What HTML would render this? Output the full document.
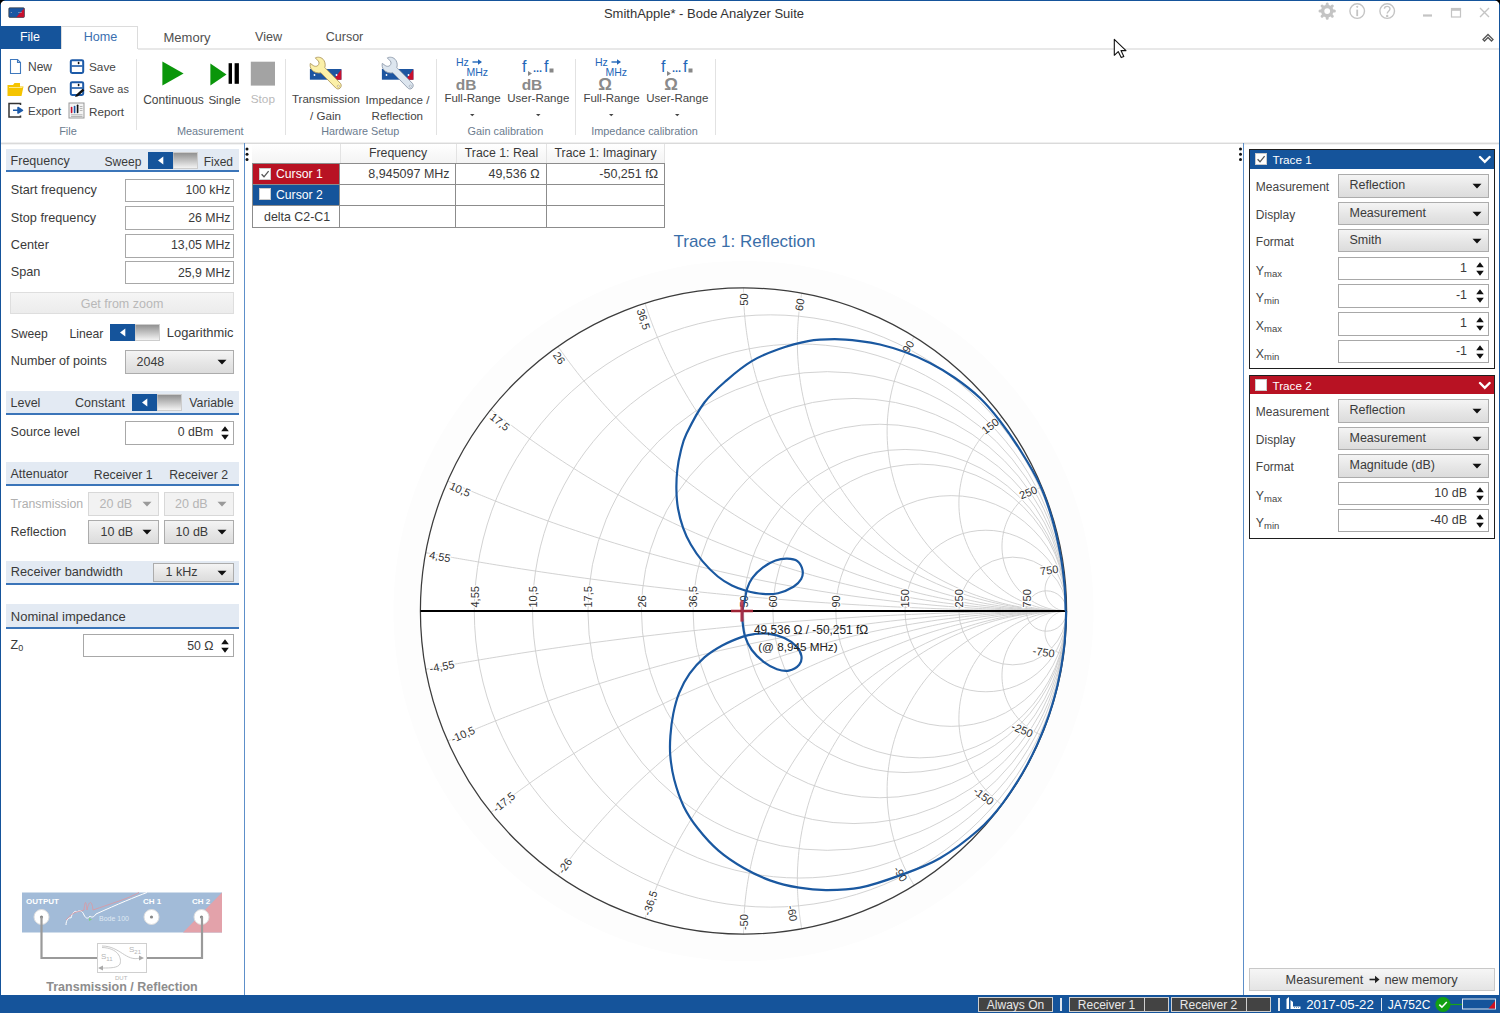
<!DOCTYPE html>
<html><head><meta charset="utf-8"><style>
html,body{margin:0;padding:0;}
body{width:1500px;height:1013px;position:relative;overflow:hidden;background:#fff;font-family:"Liberation Sans", sans-serif;}
.t{position:absolute;white-space:nowrap;font-family:"Liberation Sans", sans-serif;}
</style></head><body>
<div style="position:absolute;left:0px;top:0px;width:1500px;height:1px;background:#15549b"></div>
<div style="position:absolute;left:0px;top:0px;width:1px;height:1013px;background:#15549b"></div>
<div style="position:absolute;left:1499px;top:0px;width:1px;height:1013px;background:#15549b"></div>
<svg style="position:absolute;left:8px;top:7px" width="18" height="12"><rect x="0.8" y="0.8" width="15.6" height="9.6" rx="1" fill="#1a56a3" stroke="#3a3a3a" stroke-width="0.7"/><path d="M16.2,1.3 L16.2,10.2 L8.3,10.2 Z" fill="#c8102e"/><circle cx="3.3" cy="5.5" r="0.6" fill="#aab"/><path d="M10,5.5 H14" stroke="#aab" stroke-width="0.6"/></svg>
<svg style="position:absolute;left:0;top:0" width="6" height="6"><path d="M0,0 H5 L3,1 L1,3 L0,5 Z" fill="#000"/></svg>
<svg style="position:absolute;left:1494px;top:0" width="6" height="6"><path d="M6,0 H1 L3,1 L5,3 L6,5 Z" fill="#000"/></svg>
<div class="t" style="left:404px;width:600px;text-align:center;top:6.60px;font-size:13px;line-height:13px;color:#333;font-weight:400;">SmithApple* - Bode Analyzer Suite</div>
<svg style="position:absolute;left:1310px;top:0px" width="190" height="26" fill="none" stroke="#c4c4c4">
<g transform="translate(17.2,11.1)"><circle r="4.6" stroke-width="3.4"/><g stroke-width="3" stroke-linecap="round"><path d="M0,-7.2V-5.5M0,7.2V5.5M-7.2,0H-5.5M7.2,0H5.5M-5.1,-5.1L-3.9,-3.9M5.1,5.1L3.9,3.9M-5.1,5.1L-3.9,3.9M5.1,-5.1L3.9,-3.9"/></g></g>
<g transform="translate(47.2,11.1)" stroke-width="1.4"><circle r="7.3"/><path d="M0,-1.5V5" stroke-width="1.8"/><circle cy="-4.3" r="0.6" fill="#c4c4c4" stroke-width="1"/></g>
<g transform="translate(77.2,11.1)" stroke-width="1.4"><circle r="7.3"/><path d="M-2.8,-2.3 C-2.8,-5.5 2.8,-5.5 2.8,-2.3 C2.8,0 0,0.3 0,2.5" stroke-width="1.4"/><circle cy="4.8" r="0.5" fill="#c4c4c4"/></g>
<path d="M113,15.5H122" stroke-width="2.2"/>
<rect x="141.5" y="8.5" width="9" height="8.5" stroke-width="1.2"/><path d="M141.5,9.8H150.5" stroke-width="2"/>
<path d="M170,8L179,17M179,8L170,17" stroke-width="1.4"/>
</svg>
<div style="position:absolute;left:0px;top:26px;width:61px;height:23px;background:#15549b"></div>
<div class="t" style="left:-270px;width:600px;text-align:center;top:31.00px;font-size:13px;line-height:13px;color:#ffffff;font-weight:400;font-size:12.5px">File</div>
<div style="position:absolute;left:61px;top:26px;width:77px;height:23px;background:#fff;border:1px solid #dcdcdc;border-bottom:none;box-sizing:border-box"></div>
<div class="t" style="left:-199.5px;width:600px;text-align:center;top:30.83px;font-size:12.6px;line-height:12.6px;color:#3a6fb0;font-weight:400;">Home</div>
<div class="t" style="left:-113px;width:600px;text-align:center;top:30.50px;font-size:13px;line-height:13px;color:#505050;font-weight:400;">Memory</div>
<div class="t" style="left:-31.5px;width:600px;text-align:center;top:30.83px;font-size:12.6px;line-height:12.6px;color:#505050;font-weight:400;">View</div>
<div class="t" style="left:44.5px;width:600px;text-align:center;top:30.92px;font-size:12.5px;line-height:12.5px;color:#505050;font-weight:400;">Cursor</div>
<div style="position:absolute;left:138px;top:48px;width:1361px;height:2px;background:#e8e8e8"></div>
<svg style="position:absolute;left:1480px;top:30px" width="16" height="14" fill="none" stroke="#555" stroke-width="1.3"><path d="M3,9.5 L8,4.5 L13,9.5 L11.5,11 L8,7.5 L4.5,11 Z"/></svg>
<div style="position:absolute;left:1px;top:142px;width:1498px;height:1px;background:#efefef"></div>
<div style="position:absolute;left:1px;top:143px;width:1498px;height:1px;background:#dadada"></div>
<div style="position:absolute;left:1px;top:144px;width:1498px;height:1px;background:#f3f3f3"></div>
<div style="position:absolute;left:0px;top:995px;width:1500px;height:18px;background:#15549b"></div>
<div style="position:absolute;left:244px;top:143px;width:1px;height:852px;background:#5d8fc9"></div>
<div style="position:absolute;left:1243px;top:143px;width:1px;height:852px;background:#5d8fc9"></div>
<svg style="position:absolute;left:0;top:50px" width="140" height="80">
<g fill="none" stroke="#3f78bd" stroke-width="1.1"><path d="M10.5,9.5 H17.5 L20.5,12.5 V23.5 H10.5 Z"/><path d="M17.5,9.5 V12.5 H20.5"/></g>
<g><rect x="70.8" y="10.3" width="12.4" height="12.6" rx="1.3" fill="#fff" stroke="#1c5aa8" stroke-width="2"/><path d="M71.5,16 H82.5" stroke="#1c5aa8" stroke-width="1.6"/><ellipse cx="78.6" cy="13" rx="0.9" ry="1.3" fill="#111"/></g>
<path d="M7.5,35 H13 L14.5,33 H20 V36.5 H23.5 L21.5,46 H7.5 Z" fill="#f5c400"/><path d="M9,37.5 H22.5" stroke="#fff3b0" stroke-width="0.8"/>
<g><rect x="70.8" y="32.3" width="12.4" height="12.6" rx="1.3" fill="#fff" stroke="#1c5aa8" stroke-width="2"/><path d="M71.5,38 H82.5" stroke="#1c5aa8" stroke-width="1.6"/><ellipse cx="78.6" cy="35" rx="0.9" ry="1.3" fill="#111"/><path d="M75,47 L76.3,44.6 L82.6,38.8 L84.3,40.4 L78,46.2 Z" fill="#111"/></g>
<g fill="none" stroke="#333" stroke-width="1.5"><path d="M20.5,55 V53.5 H9 V67 H20.5 V65.5"/></g><path d="M13,60.3 H18 V57.5 L22.5,60.3 L18,63 V60.3" fill="#1c5aa8" stroke="#1c5aa8" stroke-width="1.5" stroke-linejoin="round"/>
<rect x="69" y="53" width="15" height="15" fill="#f4f4f4" stroke="#999" stroke-width="1"/>
<path d="M71.6,57.5V62.5" stroke="#c8102e" stroke-width="1.6" stroke-linecap="round"/><path d="M74.6,56.5V62.5" stroke="#1c5aa8" stroke-width="1.6" stroke-linecap="round"/><path d="M77.6,55.2V62.5" stroke="#111" stroke-width="1.6" stroke-linecap="round"/>
<path d="M79.8,56.5H82.5M79.8,58.5H82.5M79.8,60.5H82.5M71,64.8H82.5M71,66.5H82.5" stroke="#999" stroke-width="0.7"/>
<path d="M136.5,9V85" stroke="#e2e2e2"/>
</svg>
<div class="t" style="left:28px;top:61.44px;font-size:12px;line-height:12px;color:#444;font-weight:400;">New</div>
<div class="t" style="left:89px;top:61.61px;font-size:11.8px;line-height:11.8px;color:#444;font-weight:400;">Save</div>
<div class="t" style="left:27.5px;top:83.61px;font-size:11.8px;line-height:11.8px;color:#444;font-weight:400;">Open</div>
<div class="t" style="left:89px;top:84.37px;font-size:10.9px;line-height:10.9px;color:#444;font-weight:400;letter-spacing:0.1px">Save as</div>
<div class="t" style="left:28px;top:105.97px;font-size:11.5px;line-height:11.5px;color:#444;font-weight:400;">Export</div>
<div class="t" style="left:89px;top:105.80px;font-size:11.7px;line-height:11.7px;color:#444;font-weight:400;">Report</div>
<div class="t" style="left:-232px;width:600px;text-align:center;top:126.09px;font-size:11px;line-height:11px;color:#6b7b8e;font-weight:400;">File</div>
<svg style="position:absolute;left:136px;top:50px" width="160" height="90">
<path d="M26.4,11.4 L47.6,23.5 L26.4,35.6 Z" fill="#0a960a"/>
<path d="M74.4,13.5 L90.5,24.5 L74.4,35.6 Z" fill="#0a960a"/>
<rect x="92.6" y="13.2" width="3.4" height="20.6" fill="#000"/><rect x="98.6" y="13.2" width="4.3" height="20.6" fill="#000"/>
<rect x="114.8" y="11.7" width="24.2" height="23.9" fill="#a3a3a3"/>
<path d="M149.5,9V85" stroke="#e2e2e2"/>
</svg>
<div class="t" style="left:-126.5px;width:600px;text-align:center;top:93.54px;font-size:12px;line-height:12px;color:#444;font-weight:400;">Continuous</div>
<div class="t" style="left:-75.5px;width:600px;text-align:center;top:93.88px;font-size:11.6px;line-height:11.6px;color:#444;font-weight:400;">Single</div>
<div class="t" style="left:-37.19999999999999px;width:600px;text-align:center;top:93.71px;font-size:11.8px;line-height:11.8px;color:#b9b9b9;font-weight:400;">Stop</div>
<div class="t" style="left:-89.80000000000001px;width:600px;text-align:center;top:126.37px;font-size:10.9px;line-height:10.9px;color:#6b7b8e;font-weight:400;">Measurement</div>
<svg style="position:absolute;left:305px;top:52px" width="120" height="45">
<g transform="translate(0,0)">
<rect x="4.9" y="17" width="31.5" height="10.7" fill="#1d55a0"/><path d="M36.4,17.3 V27.7 H28.7 Z" fill="#c8102e"/>
<circle cx="9.5" cy="23" r="0.9" fill="#fff"/><circle cx="31.5" cy="23" r="0.9" fill="#fff"/>
<path d="M10.3,5.9 C12.5,4.6 17,5 19,8.5 C20.3,10.8 20.5,13.5 19.8,15.6 L35.4,31.3 C36.9,32.9 36.3,36 34,36.8 C32.8,37.2 31.6,36.8 30.8,36 L15.9,20.8 C12.8,21.4 9,20.5 6.8,17.8 C5.1,15.8 4.9,13.2 5.3,11.4 L8.3,13.6 C9.6,14.5 11.6,14.6 12.8,13.6 C14.2,12.4 14.4,10.2 13.3,9 Z" fill="#fbf0a8" stroke="#b09a5e" stroke-width="0.9" stroke-linejoin="round"/>
<circle cx="33.3" cy="34.2" r="1.1" fill="#fff" stroke="#b09a5e" stroke-width="0.6"/>
</g>
<g transform="translate(72,0)">
<rect x="4.9" y="17" width="31.5" height="10.7" fill="#1d55a0"/><path d="M36.4,17.3 V27.7 H28.7 Z" fill="#c8102e"/>
<circle cx="9.5" cy="23" r="0.9" fill="#fff"/><circle cx="31.5" cy="23" r="0.9" fill="#fff"/>
<path d="M10.3,5.9 C12.5,4.6 17,5 19,8.5 C20.3,10.8 20.5,13.5 19.8,15.6 L35.4,31.3 C36.9,32.9 36.3,36 34,36.8 C32.8,37.2 31.6,36.8 30.8,36 L15.9,20.8 C12.8,21.4 9,20.5 6.8,17.8 C5.1,15.8 4.9,13.2 5.3,11.4 L8.3,13.6 C9.6,14.5 11.6,14.6 12.8,13.6 C14.2,12.4 14.4,10.2 13.3,9 Z" fill="#dde6ef" stroke="#8f9bab" stroke-width="0.9" stroke-linejoin="round"/>
<circle cx="33.3" cy="34.2" r="1.1" fill="#fff" stroke="#8f9bab" stroke-width="0.6"/>
</g>
</svg>
<div class="t" style="left:26px;width:600px;text-align:center;top:93.97px;font-size:11.5px;line-height:11.5px;color:#444;font-weight:400;">Transmission</div>
<div class="t" style="left:25.5px;width:600px;text-align:center;top:109.98px;font-size:11.6px;line-height:11.6px;color:#444;font-weight:400;">/ Gain</div>
<div class="t" style="left:97.5px;width:600px;text-align:center;top:93.88px;font-size:11.6px;line-height:11.6px;color:#444;font-weight:400;">Impedance /</div>
<div class="t" style="left:97.30000000000001px;width:600px;text-align:center;top:109.98px;font-size:11.6px;line-height:11.6px;color:#444;font-weight:400;">Reflection</div>
<div class="t" style="left:60.19999999999999px;width:600px;text-align:center;top:126.46px;font-size:10.8px;line-height:10.8px;color:#6b7b8e;font-weight:400;">Hardware Setup</div>
<div style="position:absolute;left:436px;top:59px;width:1px;height:76px;background:#e2e2e2"></div>
<svg style="position:absolute;left:456px;top:50px" width="260" height="70">
<g transform="translate(0,0)">
<text x="0" y="15.5" font-size="10.5" fill="#2266b8" font-family="Liberation Sans">Hz</text>
<path d="M16.5,12 H24" stroke="#2266b8" stroke-width="1.4"/><path d="M22,9.3 L26,12 L22,14.7 Z" fill="#2266b8"/>
<text x="10.5" y="25.5" font-size="10.5" fill="#2266b8" font-family="Liberation Sans">MHz</text>
<text x="10" y="39.5" font-size="15.5" fill="#8a8a8a" font-weight="bold" font-family="Liberation Sans" text-anchor="middle">dB</text>
<text x="66" y="22" font-size="16" fill="#2266b8" font-family="Liberation Sans">f</text>
<path d="M72,21 L76,23.5 L72,26 Z" fill="#888"/>
<text x="77" y="22" font-size="11" fill="#2266b8" font-family="Liberation Sans" font-weight="bold">...</text>
<text x="88" y="22" font-size="16" fill="#2266b8" font-family="Liberation Sans">f</text>
<rect x="93.5" y="18.5" width="4" height="4" fill="#888"/>
<text x="76" y="39.5" font-size="15.5" fill="#8a8a8a" font-weight="bold" font-family="Liberation Sans" text-anchor="middle">dB</text>
<path d="M14,64 L18.5,64 L16.25,66.3 Z" fill="#444"/>
<path d="M80,64 L84.5,64 L82.25,66.3 Z" fill="#444"/>
</g>
<g transform="translate(139,0)">
<text x="0" y="15.5" font-size="10.5" fill="#2266b8" font-family="Liberation Sans">Hz</text>
<path d="M16.5,12 H24" stroke="#2266b8" stroke-width="1.4"/><path d="M22,9.3 L26,12 L22,14.7 Z" fill="#2266b8"/>
<text x="10.5" y="25.5" font-size="10.5" fill="#2266b8" font-family="Liberation Sans">MHz</text>
<text x="10" y="39.5" font-size="17" fill="#8a8a8a" font-weight="bold" font-family="Liberation Sans" text-anchor="middle">Ω</text>
<text x="66" y="22" font-size="16" fill="#2266b8" font-family="Liberation Sans">f</text>
<path d="M72,21 L76,23.5 L72,26 Z" fill="#888"/>
<text x="77" y="22" font-size="11" fill="#2266b8" font-family="Liberation Sans" font-weight="bold">...</text>
<text x="88" y="22" font-size="16" fill="#2266b8" font-family="Liberation Sans">f</text>
<rect x="93.5" y="18.5" width="4" height="4" fill="#888"/>
<text x="76" y="39.5" font-size="17" fill="#8a8a8a" font-weight="bold" font-family="Liberation Sans" text-anchor="middle">Ω</text>
<path d="M14,64 L18.5,64 L16.25,66.3 Z" fill="#444"/>
<path d="M80,64 L84.5,64 L82.25,66.3 Z" fill="#444"/>
</g>
</svg>
<div class="t" style="left:172.5px;width:600px;text-align:center;top:93.27px;font-size:11.5px;line-height:11.5px;color:#444;font-weight:400;">Full-Range</div>
<div class="t" style="left:238.29999999999995px;width:600px;text-align:center;top:93.27px;font-size:11.5px;line-height:11.5px;color:#444;font-weight:400;">User-Range</div>
<div class="t" style="left:205.39999999999998px;width:600px;text-align:center;top:126.37px;font-size:10.9px;line-height:10.9px;color:#6b7b8e;font-weight:400;">Gain calibration</div>
<div style="position:absolute;left:575px;top:59px;width:1px;height:76px;background:#e2e2e2"></div>
<div class="t" style="left:311.5px;width:600px;text-align:center;top:93.27px;font-size:11.5px;line-height:11.5px;color:#444;font-weight:400;">Full-Range</div>
<div class="t" style="left:377.29999999999995px;width:600px;text-align:center;top:93.27px;font-size:11.5px;line-height:11.5px;color:#444;font-weight:400;">User-Range</div>
<div class="t" style="left:344.5px;width:600px;text-align:center;top:126.37px;font-size:10.9px;line-height:10.9px;color:#6b7b8e;font-weight:400;">Impedance calibration</div>
<div style="position:absolute;left:715px;top:59px;width:1px;height:76px;background:#e2e2e2"></div>
<svg style="position:absolute;left:1113px;top:38px" width="18" height="23"><path d="M1.3,1.3 L1.3,17.3 L5.2,13.6 L8.2,19.6 L10.8,18.5 L8,12.6 L13,12.6 Z" fill="#fff" stroke="#111" stroke-width="1.1" stroke-linejoin="round"/></svg>
<div style="position:absolute;left:6px;top:149px;width:233px;height:21px;background:#e3eaf3"></div>
<div style="position:absolute;left:6px;top:170px;width:233px;height:2px;background:#3b75b9"></div>
<div class="t" style="left:10.6px;top:155.32px;font-size:12.5px;line-height:12.5px;color:#3a3a3a;font-weight:400;">Frequency</div>
<div class="t" style="left:104.5px;top:155.66px;font-size:12.1px;line-height:12.1px;color:#3a3a3a;font-weight:400;">Sweep</div>
<svg style="position:absolute;left:147.7px;top:152px" width="51" height="17">
<defs><linearGradient id="tg" x1="0" y1="0" x2="0" y2="1"><stop offset="0" stop-color="#8e8e8e"/><stop offset="1" stop-color="#f6f6f6"/></linearGradient></defs>
<rect x="25" y="0.5" width="24.5" height="16" fill="url(#tg)" stroke="#cdcdcd" stroke-width="1"/>
<rect x="0" y="0" width="25" height="17" fill="#15549b"/>
<path d="M10,8.5 L15.3,4.5 L15.3,12.5 Z" fill="#fff"/>
</svg>
<div class="t" style="left:-267px;width:500px;text-align:right;top:155.74px;font-size:12px;line-height:12px;color:#3a3a3a;font-weight:400;">Fixed</div>
<div class="t" style="left:10.8px;top:183.55px;font-size:12.7px;line-height:12.7px;color:#3a3a3a;font-weight:400;">Start frequency</div>
<div style="position:absolute;left:125px;top:179px;width:109px;height:23px;background:#fff;border:1px solid #a8a8a8;box-sizing:border-box"></div>
<div class="t" style="left:-269.5px;width:500px;text-align:right;top:183.89px;font-size:12.3px;line-height:12.3px;color:#3a3a3a;font-weight:400;">100 kHz</div>
<div class="t" style="left:10.8px;top:211.55px;font-size:12.7px;line-height:12.7px;color:#3a3a3a;font-weight:400;">Stop frequency</div>
<div style="position:absolute;left:125px;top:206px;width:109px;height:24px;background:#fff;border:1px solid #a8a8a8;box-sizing:border-box"></div>
<div class="t" style="left:-269.5px;width:500px;text-align:right;top:211.89px;font-size:12.3px;line-height:12.3px;color:#3a3a3a;font-weight:400;">26 MHz</div>
<div class="t" style="left:10.8px;top:239.15px;font-size:12.7px;line-height:12.7px;color:#3a3a3a;font-weight:400;">Center</div>
<div style="position:absolute;left:125px;top:234px;width:109px;height:24px;background:#fff;border:1px solid #a8a8a8;box-sizing:border-box"></div>
<div class="t" style="left:-269.5px;width:500px;text-align:right;top:239.49px;font-size:12.3px;line-height:12.3px;color:#3a3a3a;font-weight:400;">13,05 MHz</div>
<div class="t" style="left:10.8px;top:266.45px;font-size:12.7px;line-height:12.7px;color:#3a3a3a;font-weight:400;">Span</div>
<div style="position:absolute;left:125px;top:261px;width:109px;height:23px;background:#fff;border:1px solid #a8a8a8;box-sizing:border-box"></div>
<div class="t" style="left:-269.5px;width:500px;text-align:right;top:266.79px;font-size:12.3px;line-height:12.3px;color:#3a3a3a;font-weight:400;">25,9 MHz</div>
<div style="position:absolute;left:10px;top:292px;width:224px;height:22px;background:linear-gradient(#f5f5f5,#ececec);border:1px solid #dedede;box-sizing:border-box"></div>
<div class="t" style="left:-178px;width:600px;text-align:center;top:297.72px;font-size:12.5px;line-height:12.5px;color:#b8b8b8;font-weight:400;">Get from zoom</div>
<div class="t" style="left:10.8px;top:327.76px;font-size:12.1px;line-height:12.1px;color:#3a3a3a;font-weight:400;">Sweep</div>
<div class="t" style="left:69.5px;top:327.67px;font-size:12.2px;line-height:12.2px;color:#3a3a3a;font-weight:400;">Linear</div>
<svg style="position:absolute;left:109.7px;top:324px" width="51" height="17">
<defs><linearGradient id="tg" x1="0" y1="0" x2="0" y2="1"><stop offset="0" stop-color="#8e8e8e"/><stop offset="1" stop-color="#f6f6f6"/></linearGradient></defs>
<rect x="25" y="0.5" width="24.5" height="16" fill="url(#tg)" stroke="#cdcdcd" stroke-width="1"/>
<rect x="0" y="0" width="25" height="17" fill="#15549b"/>
<path d="M10,8.5 L15.3,4.5 L15.3,12.5 Z" fill="#fff"/>
</svg>
<div class="t" style="left:-266.5px;width:500px;text-align:right;top:327.08px;font-size:12.9px;line-height:12.9px;color:#3a3a3a;font-weight:400;">Logarithmic</div>
<div class="t" style="left:10.8px;top:355.43px;font-size:12.6px;line-height:12.6px;color:#3a3a3a;font-weight:400;">Number of points</div>
<div style="position:absolute;left:125px;top:350px;width:109px;height:24px;background:linear-gradient(#f4f4f4,#e6e6e6 55%,#dcdcdc);border:1px solid #acacac;box-sizing:border-box"></div>
<div class="t" style="left:136.5px;top:355.52px;font-size:12.5px;line-height:12.5px;color:#3a3a3a;font-weight:400;">2048</div>
<svg style="position:absolute;left:216.5px;top:359.0px" width="10" height="6"><path d="M0.5,0.8 L9.5,0.8 L5,5.5 Z" fill="#111"/></svg>
<div style="position:absolute;left:6px;top:391px;width:233px;height:22px;background:#e3eaf3"></div>
<div style="position:absolute;left:6px;top:413px;width:233px;height:2px;background:#3b75b9"></div>
<div class="t" style="left:10.5px;top:396.72px;font-size:12.5px;line-height:12.5px;color:#3a3a3a;font-weight:400;">Level</div>
<div class="t" style="left:75px;top:396.72px;font-size:12.5px;line-height:12.5px;color:#3a3a3a;font-weight:400;">Constant</div>
<svg style="position:absolute;left:131.7px;top:394px" width="51" height="17">
<defs><linearGradient id="tg" x1="0" y1="0" x2="0" y2="1"><stop offset="0" stop-color="#8e8e8e"/><stop offset="1" stop-color="#f6f6f6"/></linearGradient></defs>
<rect x="25" y="0.5" width="24.5" height="16" fill="url(#tg)" stroke="#cdcdcd" stroke-width="1"/>
<rect x="0" y="0" width="25" height="17" fill="#15549b"/>
<path d="M10,8.5 L15.3,4.5 L15.3,12.5 Z" fill="#fff"/>
</svg>
<div class="t" style="left:-266.5px;width:500px;text-align:right;top:396.89px;font-size:12.3px;line-height:12.3px;color:#3a3a3a;font-weight:400;">Variable</div>
<div class="t" style="left:10.5px;top:426.03px;font-size:12.6px;line-height:12.6px;color:#3a3a3a;font-weight:400;">Source level</div>
<div style="position:absolute;left:125px;top:421px;width:109px;height:24px;background:#fff;border:1px solid #a8a8a8;box-sizing:border-box"></div>
<svg style="position:absolute;left:220px;top:425.0px" width="10" height="16"><path d="M1.2,6.2 L5,1.2 L8.8,6.2 Z M1.2,9.8 L8.8,9.8 L5,14.8 Z" fill="#111"/></svg>
<div class="t" style="left:-286.7px;width:500px;text-align:right;top:426.29px;font-size:12.3px;line-height:12.3px;color:#3a3a3a;font-weight:400;">0 dBm</div>
<div style="position:absolute;left:6px;top:462px;width:233px;height:22px;background:#e3eaf3"></div>
<div style="position:absolute;left:6px;top:484px;width:233px;height:2px;background:#3b75b9"></div>
<div class="t" style="left:10.5px;top:468.42px;font-size:12.5px;line-height:12.5px;color:#3a3a3a;font-weight:400;">Attenuator</div>
<div class="t" style="left:-176.8px;width:600px;text-align:center;top:468.59px;font-size:12.3px;line-height:12.3px;color:#3a3a3a;font-weight:400;">Receiver 1</div>
<div class="t" style="left:-101.4px;width:600px;text-align:center;top:468.59px;font-size:12.3px;line-height:12.3px;color:#3a3a3a;font-weight:400;">Receiver 2</div>
<div class="t" style="left:10.5px;top:497.89px;font-size:12.3px;line-height:12.3px;color:#b0b0b0;font-weight:400;">Transmission</div>
<div style="position:absolute;left:88px;top:492px;width:71px;height:24px;background:#f2f2f2;border:1px solid #d8d8d8;box-sizing:border-box"></div>
<div class="t" style="left:99.5px;top:497.72px;font-size:12.5px;line-height:12.5px;color:#b5b5b5;font-weight:400;">20 dB</div>
<svg style="position:absolute;left:141.5px;top:501.0px" width="10" height="6"><path d="M0.5,0.8 L9.5,0.8 L5,5.5 Z" fill="#999"/></svg>
<div style="position:absolute;left:164px;top:492px;width:70px;height:24px;background:#f2f2f2;border:1px solid #d8d8d8;box-sizing:border-box"></div>
<div class="t" style="left:175px;top:497.72px;font-size:12.5px;line-height:12.5px;color:#b5b5b5;font-weight:400;">20 dB</div>
<svg style="position:absolute;left:216.5px;top:501.0px" width="10" height="6"><path d="M0.5,0.8 L9.5,0.8 L5,5.5 Z" fill="#999"/></svg>
<div class="t" style="left:10.5px;top:526.02px;font-size:12.5px;line-height:12.5px;color:#3a3a3a;font-weight:400;">Reflection</div>
<div style="position:absolute;left:88px;top:520px;width:71px;height:24px;background:linear-gradient(#f4f4f4,#e6e6e6 55%,#dcdcdc);border:1px solid #acacac;box-sizing:border-box"></div>
<div class="t" style="left:100.5px;top:526.02px;font-size:12.5px;line-height:12.5px;color:#3a3a3a;font-weight:400;">10 dB</div>
<svg style="position:absolute;left:141.5px;top:529.0px" width="10" height="6"><path d="M0.5,0.8 L9.5,0.8 L5,5.5 Z" fill="#111"/></svg>
<div style="position:absolute;left:164px;top:520px;width:70px;height:24px;background:linear-gradient(#f4f4f4,#e6e6e6 55%,#dcdcdc);border:1px solid #acacac;box-sizing:border-box"></div>
<div class="t" style="left:175.5px;top:526.02px;font-size:12.5px;line-height:12.5px;color:#3a3a3a;font-weight:400;">10 dB</div>
<svg style="position:absolute;left:216.5px;top:529.0px" width="10" height="6"><path d="M0.5,0.8 L9.5,0.8 L5,5.5 Z" fill="#111"/></svg>
<div style="position:absolute;left:6px;top:561px;width:233px;height:22px;background:#e3eaf3"></div>
<div style="position:absolute;left:6px;top:583px;width:233px;height:2px;background:#3b75b9"></div>
<div class="t" style="left:10.8px;top:565.91px;font-size:12.75px;line-height:12.75px;color:#3a3a3a;font-weight:400;">Receiver bandwidth</div>
<div style="position:absolute;left:153px;top:563px;width:81px;height:19px;background:linear-gradient(#f4f4f4,#e6e6e6 55%,#dcdcdc);border:1px solid #acacac;box-sizing:border-box"></div>
<div class="t" style="left:165.5px;top:566.12px;font-size:12.5px;line-height:12.5px;color:#3a3a3a;font-weight:400;">1 kHz</div>
<svg style="position:absolute;left:216.5px;top:569.5px" width="10" height="6"><path d="M0.5,0.8 L9.5,0.8 L5,5.5 Z" fill="#111"/></svg>
<div style="position:absolute;left:6px;top:604px;width:233px;height:23px;background:#e3eaf3"></div>
<div style="position:absolute;left:6px;top:627px;width:233px;height:2px;background:#3b75b9"></div>
<div class="t" style="left:10.8px;top:609.80px;font-size:13px;line-height:13px;color:#3a3a3a;font-weight:400;">Nominal impedance</div>
<div class="t" style="left:10.6px;top:639.42px;font-size:12.5px;line-height:12.5px;color:#3a3a3a;font-weight:400;">Z<span style="font-size:9px;position:relative;top:2px">0</span></div>
<div style="position:absolute;left:83px;top:634px;width:151px;height:23px;background:#fff;border:1px solid #a8a8a8;box-sizing:border-box"></div>
<svg style="position:absolute;left:220px;top:637.5px" width="10" height="16"><path d="M1.2,6.2 L5,1.2 L8.8,6.2 Z M1.2,9.8 L8.8,9.8 L5,14.8 Z" fill="#111"/></svg>
<div class="t" style="left:-286.5px;width:500px;text-align:right;top:639.59px;font-size:12.3px;line-height:12.3px;color:#3a3a3a;font-weight:400;">50 Ω</div>
<svg style="position:absolute;left:0;top:880px" width="244" height="115">
<rect x="22" y="12.5" width="200" height="40" fill="#a2bbd8"/>
<path d="M222,12.5 V52.5 H183 Z" fill="#e3a2aa"/>
<g fill="#fff" font-family="Liberation Sans" font-weight="bold" font-size="8">
<text x="26" y="24">OUTPUT</text><text x="143" y="24">CH 1</text><text x="192" y="24">CH 2</text></g>
<text x="99" y="41" font-family="Liberation Sans" font-size="7" fill="#dfe8f2">Bode 100</text>
<path d="M66,45 C66,40 69,37 71,38 C72,33 75,30 77,32 C80,29 83,32 84,35 C86,39 88,39 90,36 C92,38 94,37 96,34 C118,24 135,17 147,12.5" fill="none" stroke="#fff" stroke-width="1"/><path d="M89,38 L92,39.5 L89,41 Z" fill="#7fd07f"/>
<path d="M66,40 C74,30 80,32 84,30 C85,20 86,20 87,30 C89,20 92,20 93,30 C110,24 130,18 139,12.5" fill="none" stroke="#d99aa4" stroke-width="0.9"/>
<g fill="#fff" stroke="#ddd" stroke-width="1"><circle cx="41.5" cy="37" r="7.5"/><circle cx="151.5" cy="37" r="7.5"/><circle cx="201.5" cy="37" r="7.5"/></g>
<g fill="#888"><circle cx="41.5" cy="37" r="1.6"/><circle cx="151.5" cy="37" r="1.6"/><circle cx="201.5" cy="37" r="1.6"/></g>
<path d="M41.5,37 V78 H97 M147,78 H202 V37" fill="none" stroke="#9a9a9a" stroke-width="2.2"/>
<rect x="97.5" y="63.5" width="49" height="29" fill="#fff" stroke="#cfcfcf" stroke-width="1"/>
<path d="M102,66 C120,66 126,82 140,78" fill="none" stroke="#bbb" stroke-width="0.8"/><path d="M139,75.5 L144,78 L139,80.5 Z M103,85.5 L98,88 L103,90.5 Z" fill="#aaa"/>
<path d="M102,67.5 C118,68 122,78 120,84 C118,88 110,88 103,88" fill="none" stroke="#bbb" stroke-width="0.8"/>
<g font-family="Liberation Sans" font-size="8" fill="#b5b5b5"><text x="101" y="79">S<tspan font-size="6" dy="2">11</tspan></text><text x="129" y="72">S<tspan font-size="6" dy="2">21</tspan></text><text x="115" y="100" font-size="6">DUT</text></g>
</svg>
<div class="t" style="left:-178px;width:600px;text-align:center;top:981.22px;font-size:12.5px;line-height:12.5px;color:#8d8d8d;font-weight:700;">Transmission / Reflection</div>
<div style="position:absolute;left:245px;top:144px;width:998px;height:851px;background:#fff"></div>
<svg style="position:absolute;left:245px;top:146px" width="5" height="16"><circle cx="2" cy="3" r="1.5" fill="#111"/><circle cx="2" cy="8.3" r="1.5" fill="#111"/><circle cx="2" cy="13.6" r="1.5" fill="#111"/></svg>
<svg style="position:absolute;left:1238px;top:146px" width="5" height="16"><circle cx="2.5" cy="3" r="1.5" fill="#111"/><circle cx="2.5" cy="8.3" r="1.5" fill="#111"/><circle cx="2.5" cy="13.6" r="1.5" fill="#111"/></svg>
<div style="position:absolute;left:252px;top:144px;width:412px;height:20px;background:linear-gradient(#ffffff,#f3f3f3)"></div>
<div style="position:absolute;left:340px;top:144px;width:1px;height:20px;background:#e3e3e3"></div>
<div style="position:absolute;left:456px;top:144px;width:1px;height:20px;background:#e3e3e3"></div>
<div style="position:absolute;left:546px;top:144px;width:1px;height:20px;background:#e3e3e3"></div>
<div style="position:absolute;left:664px;top:144px;width:1px;height:20px;background:#e3e3e3"></div>
<div class="t" style="left:98px;width:600px;text-align:center;top:146.59px;font-size:12.3px;line-height:12.3px;color:#3a3a3a;font-weight:400;">Frequency</div>
<div class="t" style="left:201.5px;width:600px;text-align:center;top:146.59px;font-size:12.3px;line-height:12.3px;color:#3a3a3a;font-weight:400;">Trace 1: Real</div>
<div class="t" style="left:305.6px;width:600px;text-align:center;top:146.59px;font-size:12.3px;line-height:12.3px;color:#3a3a3a;font-weight:400;">Trace 1: Imaginary</div>
<div style="position:absolute;left:252px;top:163px;width:413px;height:65px;border:1px solid #8c8c8c;box-sizing:border-box;background:#fff"></div>
<div style="position:absolute;left:253px;top:164px;width:87px;height:20px;background:#b81223"></div>
<div style="position:absolute;left:253px;top:185px;width:87px;height:20px;background:#15549b"></div>
<div style="position:absolute;left:252px;top:184px;width:413px;height:1px;background:#8c8c8c"></div>
<div style="position:absolute;left:252px;top:205px;width:413px;height:1px;background:#8c8c8c"></div>
<div style="position:absolute;left:339px;top:163px;width:1px;height:65px;background:#8c8c8c"></div>
<div style="position:absolute;left:455px;top:163px;width:1px;height:65px;background:#8c8c8c"></div>
<div style="position:absolute;left:546px;top:163px;width:1px;height:65px;background:#8c8c8c"></div>
<svg style="position:absolute;left:258.5px;top:167.5px" width="12" height="12"><rect x="0.5" y="0.5" width="11" height="11" fill="#fff" stroke="#ccc"/><path d="M2.6,6.3 L5,8.8 L9.6,3.2" fill="none" stroke="#555" stroke-width="1.3"/></svg>
<svg style="position:absolute;left:258.5px;top:188px" width="12" height="12"><rect x="0.5" y="0.5" width="11" height="11" fill="#fff" stroke="#ccc"/></svg>
<div class="t" style="left:276px;top:168.27px;font-size:12.2px;line-height:12.2px;color:#fff;font-weight:400;">Cursor 1</div>
<div class="t" style="left:276px;top:189.07px;font-size:12.2px;line-height:12.2px;color:#fff;font-weight:400;">Cursor 2</div>
<div class="t" style="left:264px;top:210.90px;font-size:12.4px;line-height:12.4px;color:#3a3a3a;font-weight:400;">delta C2-C1</div>
<div class="t" style="left:-50.39999999999998px;width:500px;text-align:right;top:168.02px;font-size:12.5px;line-height:12.5px;color:#3a3a3a;font-weight:400;">8,945097 MHz</div>
<div class="t" style="left:39.5px;width:500px;text-align:right;top:168.02px;font-size:12.5px;line-height:12.5px;color:#3a3a3a;font-weight:400;">49,536 Ω</div>
<div class="t" style="left:158px;width:500px;text-align:right;top:168.02px;font-size:12.5px;line-height:12.5px;color:#3a3a3a;font-weight:400;">-50,251 fΩ</div>
<div class="t" style="left:444.5px;width:600px;text-align:center;top:232.61px;font-size:17px;line-height:17px;color:#3a6ea8;font-weight:400;">Trace 1: Reflection</div>
<svg style="position:absolute;left:0;top:0" width="1500" height="1013">
<defs><clipPath id="uc"><circle cx="743.5" cy="611.0" r="323.1"/></clipPath></defs>
<circle cx="743.5" cy="611.0" r="350.1" fill="#fdfdfd"/><circle cx="743.5" cy="611.0" r="323.1" fill="#fff"/>
<g clip-path="url(#uc)" fill="none" stroke="#cdcdcd" stroke-width="0.9">
<circle cx="770.45" cy="611.00" r="296.15"/>
<circle cx="799.58" cy="611.00" r="267.02"/>
<circle cx="827.27" cy="611.00" r="239.33"/>
<circle cx="854.03" cy="611.00" r="212.57"/>
<circle cx="879.84" cy="611.00" r="186.76"/>
<circle cx="905.05" cy="611.00" r="161.55"/>
<circle cx="919.74" cy="611.00" r="146.86"/>
<circle cx="951.21" cy="611.00" r="115.39"/>
<circle cx="985.83" cy="611.00" r="80.78"/>
<circle cx="1012.75" cy="611.00" r="53.85"/>
<circle cx="1046.41" cy="611.00" r="20.19"/>
<path d="M425.71,552.68 L426.34,552.79 L426.37,552.80 L426.41,552.81 L426.46,552.82 L426.50,552.82 L426.55,552.83 L426.60,552.84 L426.65,552.85 L426.70,552.86 L426.76,552.87 L426.83,552.88 L426.89,552.90 L426.96,552.91 L427.04,552.92 L427.12,552.94 L427.20,552.95 L427.29,552.97 L427.38,552.99 L427.48,553.00 L427.58,553.02 L427.69,553.04 L427.81,553.06 L427.94,553.09 L428.07,553.11 L428.21,553.14 L428.35,553.16 L428.51,553.19 L428.68,553.22 L428.85,553.25 L429.04,553.29 L429.23,553.32 L429.44,553.36 L429.66,553.40 L429.89,553.44 L430.14,553.49 L430.40,553.54 L430.68,553.59 L430.97,553.64 L431.28,553.70 L431.60,553.76 L431.95,553.82 L432.32,553.89 L432.70,553.96 L433.11,554.03 L433.55,554.11 L434.01,554.19 L434.49,554.28 L435.00,554.37 L435.55,554.47 L436.12,554.57 L436.73,554.68 L437.37,554.80 L438.04,554.92 L438.76,555.05 L439.52,555.19 L440.32,555.33 L441.16,555.48 L442.06,555.64 L443.00,555.81 L443.99,555.99 L445.04,556.17 L446.15,556.37 L447.33,556.58 L448.56,556.80 L449.86,557.03 L451.24,557.27 L452.69,557.52 L454.22,557.79 L455.83,558.07 L457.52,558.37 L459.31,558.68 L461.19,559.01 L463.17,559.35 L465.26,559.71 L467.45,560.08 L469.75,560.48 L472.18,560.89 L474.72,561.32 L477.39,561.77 L480.20,562.24 L483.14,562.73 L486.22,563.24 L489.45,563.78 L492.84,564.33 L496.38,564.91 L500.09,565.51 L503.96,566.14 L508.00,566.78 L512.23,567.45 L516.63,568.15 L521.22,568.86 L526.00,569.60 L530.97,570.37 L536.14,571.15 L541.51,571.96 L547.08,572.79 L552.85,573.63 L558.83,574.50 L565.01,575.39 L571.40,576.30 L577.99,577.22 L584.78,578.16 L591.78,579.11 L598.97,580.07 L606.35,581.04 L613.93,582.03 L621.68,583.01 L629.62,584.01 L637.72,585.00 L645.98,586.00 L654.39,586.99 L662.94,587.98 L671.62,588.96 L680.42,589.94 L689.32,590.90 L698.32,591.85 L707.39,592.78 L716.53,593.70 L725.71,594.60 L734.93,595.47 L744.17,596.33 L753.41,597.16 L762.64,597.96 L771.84,598.74 L781.00,599.49 L790.10,600.22 L799.13,600.91 L808.07,601.58 L816.92,602.21 L825.65,602.81 L834.26,603.39 L842.73,603.94 L851.06,604.45 L859.23,604.94 L867.23,605.40 L875.07,605.83 L882.72,606.24 L890.19,606.61 L897.46,606.97 L904.54,607.30 L911.42,607.61 L918.10,607.89 L924.58,608.16 L930.85,608.40 L936.91,608.63 L942.77,608.84 L948.43,609.03 L953.88,609.21 L959.14,609.37 L964.19,609.52 L969.06,609.66 L973.73,609.79 L978.21,609.90 L982.51,610.00 L986.63,610.10 L990.58,610.19 L994.35,610.26 L997.96,610.34 L1001.42,610.40 L1004.71,610.46 L1007.86,610.51 L1010.86,610.56 L1013.72,610.61 L1016.45,610.65 L1019.05,610.68 L1021.52,610.71 L1023.88,610.74 L1026.12,610.77 L1028.25,610.79 L1030.27,610.81 L1032.20,610.83 L1034.02,610.85 L1035.76,610.87 L1037.41,610.88 L1038.97,610.89 L1040.45,610.90 L1041.86,610.91 L1043.19,610.92 L1044.46,610.93 L1045.66,610.94 L1046.79,610.94 L1047.87,610.95 L1048.89,610.96 L1049.85,610.96 L1050.77,610.96 L1051.63,610.97 L1052.45,610.97 L1053.23,610.97 L1053.96,610.98 L1054.65,610.98 L1055.31,610.98 L1055.93,610.98 L1056.52,610.99 L1057.07,610.99 L1057.60,610.99 L1058.10,610.99 L1058.57,610.99 L1059.01,610.99 L1059.43,610.99 L1059.83,610.99 L1060.20,610.99 L1060.56,610.99 L1060.89,611.00 L1061.21,611.00 L1061.51,611.00 L1061.79,611.00 L1062.06,611.00 L1062.31,611.00 L1062.55,611.00 L1062.77,611.00 L1062.99,611.00 L1063.19,611.00 L1063.38,611.00 L1063.56,611.00 L1063.73,611.00 L1063.89,611.00 L1064.04,611.00 L1064.18,611.00 L1064.32,611.00 L1064.44,611.00 L1064.56,611.00 L1064.68,611.00 L1064.78,611.00 L1064.89,611.00 L1064.98,611.00 L1065.07,611.00 L1065.16,611.00 L1065.24,611.00 L1065.31,611.00 L1065.39,611.00 L1065.45,611.00 L1065.52,611.00 L1065.58,611.00 L1065.63,611.00 L1065.69,611.00 L1065.74,611.00 L1065.79,611.00 L1065.83,611.00 L1065.88,611.00 L1065.92,611.00 L1065.95,611.00 L1066.60,611.00"/>
<path d="M425.71,669.32 L426.34,669.21 L426.37,669.20 L426.41,669.19 L426.46,669.18 L426.50,669.18 L426.55,669.17 L426.60,669.16 L426.65,669.15 L426.70,669.14 L426.76,669.13 L426.83,669.12 L426.89,669.10 L426.96,669.09 L427.04,669.08 L427.12,669.06 L427.20,669.05 L427.29,669.03 L427.38,669.01 L427.48,669.00 L427.58,668.98 L427.69,668.96 L427.81,668.94 L427.94,668.91 L428.07,668.89 L428.21,668.86 L428.35,668.84 L428.51,668.81 L428.68,668.78 L428.85,668.75 L429.04,668.71 L429.23,668.68 L429.44,668.64 L429.66,668.60 L429.89,668.56 L430.14,668.51 L430.40,668.46 L430.68,668.41 L430.97,668.36 L431.28,668.30 L431.60,668.24 L431.95,668.18 L432.32,668.11 L432.70,668.04 L433.11,667.97 L433.55,667.89 L434.01,667.81 L434.49,667.72 L435.00,667.63 L435.55,667.53 L436.12,667.43 L436.73,667.32 L437.37,667.20 L438.04,667.08 L438.76,666.95 L439.52,666.81 L440.32,666.67 L441.16,666.52 L442.06,666.36 L443.00,666.19 L443.99,666.01 L445.04,665.83 L446.15,665.63 L447.33,665.42 L448.56,665.20 L449.86,664.97 L451.24,664.73 L452.69,664.48 L454.22,664.21 L455.83,663.93 L457.52,663.63 L459.31,663.32 L461.19,662.99 L463.17,662.65 L465.26,662.29 L467.45,661.92 L469.75,661.52 L472.18,661.11 L474.72,660.68 L477.39,660.23 L480.20,659.76 L483.14,659.27 L486.22,658.76 L489.45,658.22 L492.84,657.67 L496.38,657.09 L500.09,656.49 L503.96,655.86 L508.00,655.22 L512.23,654.55 L516.63,653.85 L521.22,653.14 L526.00,652.40 L530.97,651.63 L536.14,650.85 L541.51,650.04 L547.08,649.21 L552.85,648.37 L558.83,647.50 L565.01,646.61 L571.40,645.70 L577.99,644.78 L584.78,643.84 L591.78,642.89 L598.97,641.93 L606.35,640.96 L613.93,639.97 L621.68,638.99 L629.62,637.99 L637.72,637.00 L645.98,636.00 L654.39,635.01 L662.94,634.02 L671.62,633.04 L680.42,632.06 L689.32,631.10 L698.32,630.15 L707.39,629.22 L716.53,628.30 L725.71,627.40 L734.93,626.53 L744.17,625.67 L753.41,624.84 L762.64,624.04 L771.84,623.26 L781.00,622.51 L790.10,621.78 L799.13,621.09 L808.07,620.42 L816.92,619.79 L825.65,619.19 L834.26,618.61 L842.73,618.06 L851.06,617.55 L859.23,617.06 L867.23,616.60 L875.07,616.17 L882.72,615.76 L890.19,615.39 L897.46,615.03 L904.54,614.70 L911.42,614.39 L918.10,614.11 L924.58,613.84 L930.85,613.60 L936.91,613.37 L942.77,613.16 L948.43,612.97 L953.88,612.79 L959.14,612.63 L964.19,612.48 L969.06,612.34 L973.73,612.21 L978.21,612.10 L982.51,612.00 L986.63,611.90 L990.58,611.81 L994.35,611.74 L997.96,611.66 L1001.42,611.60 L1004.71,611.54 L1007.86,611.49 L1010.86,611.44 L1013.72,611.39 L1016.45,611.35 L1019.05,611.32 L1021.52,611.29 L1023.88,611.26 L1026.12,611.23 L1028.25,611.21 L1030.27,611.19 L1032.20,611.17 L1034.02,611.15 L1035.76,611.13 L1037.41,611.12 L1038.97,611.11 L1040.45,611.10 L1041.86,611.09 L1043.19,611.08 L1044.46,611.07 L1045.66,611.06 L1046.79,611.06 L1047.87,611.05 L1048.89,611.04 L1049.85,611.04 L1050.77,611.04 L1051.63,611.03 L1052.45,611.03 L1053.23,611.03 L1053.96,611.02 L1054.65,611.02 L1055.31,611.02 L1055.93,611.02 L1056.52,611.01 L1057.07,611.01 L1057.60,611.01 L1058.10,611.01 L1058.57,611.01 L1059.01,611.01 L1059.43,611.01 L1059.83,611.01 L1060.20,611.01 L1060.56,611.01 L1060.89,611.00 L1061.21,611.00 L1061.51,611.00 L1061.79,611.00 L1062.06,611.00 L1062.31,611.00 L1062.55,611.00 L1062.77,611.00 L1062.99,611.00 L1063.19,611.00 L1063.38,611.00 L1063.56,611.00 L1063.73,611.00 L1063.89,611.00 L1064.04,611.00 L1064.18,611.00 L1064.32,611.00 L1064.44,611.00 L1064.56,611.00 L1064.68,611.00 L1064.78,611.00 L1064.89,611.00 L1064.98,611.00 L1065.07,611.00 L1065.16,611.00 L1065.24,611.00 L1065.31,611.00 L1065.39,611.00 L1065.45,611.00 L1065.52,611.00 L1065.58,611.00 L1065.63,611.00 L1065.69,611.00 L1065.74,611.00 L1065.79,611.00 L1065.83,611.00 L1065.88,611.00 L1065.92,611.00 L1065.95,611.00 L1066.60,611.00"/>
<path d="M447.69,481.03 L448.26,481.28 L448.29,481.29 L448.33,481.31 L448.37,481.33 L448.41,481.34 L448.45,481.36 L448.49,481.38 L448.54,481.40 L448.59,481.42 L448.64,481.45 L448.70,481.47 L448.76,481.50 L448.82,481.53 L448.89,481.55 L448.96,481.59 L449.03,481.62 L449.11,481.65 L449.20,481.69 L449.29,481.73 L449.38,481.77 L449.48,481.81 L449.59,481.86 L449.70,481.91 L449.82,481.96 L449.94,482.02 L450.07,482.07 L450.21,482.13 L450.36,482.20 L450.52,482.27 L450.69,482.34 L450.86,482.42 L451.05,482.50 L451.25,482.59 L451.46,482.68 L451.68,482.77 L451.92,482.88 L452.16,482.99 L452.43,483.10 L452.70,483.22 L453.00,483.35 L453.31,483.48 L453.64,483.63 L453.99,483.78 L454.36,483.94 L454.75,484.11 L455.16,484.29 L455.60,484.48 L456.06,484.68 L456.55,484.89 L457.07,485.11 L457.62,485.35 L458.19,485.60 L458.81,485.86 L459.45,486.14 L460.14,486.43 L460.86,486.74 L461.62,487.07 L462.43,487.41 L463.28,487.78 L464.18,488.16 L465.13,488.56 L466.14,488.99 L467.20,489.44 L468.31,489.91 L469.50,490.41 L470.74,490.93 L472.06,491.48 L473.44,492.06 L474.90,492.67 L476.44,493.32 L478.07,493.99 L479.78,494.70 L481.58,495.44 L483.48,496.22 L485.47,497.03 L487.57,497.89 L489.78,498.78 L492.11,499.72 L494.55,500.70 L497.11,501.72 L499.80,502.79 L502.63,503.91 L505.59,505.07 L508.70,506.29 L511.95,507.55 L515.36,508.86 L518.92,510.22 L522.65,511.64 L526.55,513.10 L530.62,514.62 L534.87,516.19 L539.29,517.82 L543.91,519.49 L548.71,521.22 L553.70,522.99 L558.89,524.82 L564.28,526.69 L569.87,528.61 L575.66,530.57 L581.65,532.57 L587.84,534.62 L594.23,536.69 L600.82,538.80 L607.62,540.94 L614.60,543.11 L621.78,545.29 L629.14,547.50 L636.68,549.71 L644.40,551.94 L652.29,554.17 L660.33,556.39 L668.52,558.61 L676.85,560.82 L685.31,563.01 L693.89,565.17 L702.56,567.31 L711.33,569.42 L720.18,571.49 L729.08,573.52 L738.04,575.51 L747.02,577.44 L756.03,579.33 L765.03,581.16 L774.02,582.93 L782.99,584.63 L791.90,586.28 L800.76,587.86 L809.55,589.38 L818.25,590.82 L826.85,592.20 L835.33,593.52 L843.69,594.77 L851.91,595.95 L859.99,597.06 L867.91,598.12 L875.67,599.11 L883.25,600.04 L890.66,600.91 L897.88,601.72 L904.91,602.48 L911.74,603.19 L918.38,603.84 L924.82,604.45 L931.06,605.02 L937.10,605.54 L942.94,606.02 L948.57,606.47 L954.01,606.87 L959.24,607.25 L964.29,607.59 L969.13,607.91 L973.79,608.20 L978.27,608.46 L982.56,608.70 L986.67,608.92 L990.61,609.12 L994.38,609.30 L997.99,609.47 L1001.44,609.62 L1004.73,609.76 L1007.88,609.88 L1010.88,609.99 L1013.74,610.09 L1016.46,610.18 L1019.06,610.27 L1021.53,610.34 L1023.89,610.41 L1026.12,610.47 L1028.25,610.52 L1030.28,610.57 L1032.20,610.62 L1034.03,610.66 L1035.76,610.69 L1037.41,610.72 L1038.97,610.75 L1040.45,610.78 L1041.86,610.80 L1043.19,610.82 L1044.46,610.84 L1045.66,610.86 L1046.79,610.87 L1047.87,610.89 L1048.89,610.90 L1049.85,610.91 L1050.77,610.92 L1051.63,610.93 L1052.45,610.93 L1053.23,610.94 L1053.96,610.95 L1054.65,610.95 L1055.31,610.96 L1055.93,610.96 L1056.52,610.97 L1057.07,610.97 L1057.60,610.97 L1058.10,610.98 L1058.57,610.98 L1059.01,610.98 L1059.43,610.98 L1059.83,610.99 L1060.20,610.99 L1060.56,610.99 L1060.89,610.99 L1061.21,610.99 L1061.51,610.99 L1061.79,610.99 L1062.06,610.99 L1062.31,610.99 L1062.55,610.99 L1062.77,611.00 L1062.99,611.00 L1063.19,611.00 L1063.38,611.00 L1063.56,611.00 L1063.73,611.00 L1063.89,611.00 L1064.04,611.00 L1064.18,611.00 L1064.32,611.00 L1064.44,611.00 L1064.56,611.00 L1064.68,611.00 L1064.78,611.00 L1064.89,611.00 L1064.98,611.00 L1065.07,611.00 L1065.16,611.00 L1065.24,611.00 L1065.31,611.00 L1065.39,611.00 L1065.45,611.00 L1065.52,611.00 L1065.58,611.00 L1065.63,611.00 L1065.69,611.00 L1065.74,611.00 L1065.79,611.00 L1065.83,611.00 L1065.88,611.00 L1065.92,611.00 L1065.95,611.00 L1066.60,611.00"/>
<path d="M447.69,740.97 L448.26,740.72 L448.29,740.71 L448.33,740.69 L448.37,740.67 L448.41,740.66 L448.45,740.64 L448.49,740.62 L448.54,740.60 L448.59,740.58 L448.64,740.55 L448.70,740.53 L448.76,740.50 L448.82,740.47 L448.89,740.45 L448.96,740.41 L449.03,740.38 L449.11,740.35 L449.20,740.31 L449.29,740.27 L449.38,740.23 L449.48,740.19 L449.59,740.14 L449.70,740.09 L449.82,740.04 L449.94,739.98 L450.07,739.93 L450.21,739.87 L450.36,739.80 L450.52,739.73 L450.69,739.66 L450.86,739.58 L451.05,739.50 L451.25,739.41 L451.46,739.32 L451.68,739.23 L451.92,739.12 L452.16,739.01 L452.43,738.90 L452.70,738.78 L453.00,738.65 L453.31,738.52 L453.64,738.37 L453.99,738.22 L454.36,738.06 L454.75,737.89 L455.16,737.71 L455.60,737.52 L456.06,737.32 L456.55,737.11 L457.07,736.89 L457.62,736.65 L458.19,736.40 L458.81,736.14 L459.45,735.86 L460.14,735.57 L460.86,735.26 L461.62,734.93 L462.43,734.59 L463.28,734.22 L464.18,733.84 L465.13,733.44 L466.14,733.01 L467.20,732.56 L468.31,732.09 L469.50,731.59 L470.74,731.07 L472.06,730.52 L473.44,729.94 L474.90,729.33 L476.44,728.68 L478.07,728.01 L479.78,727.30 L481.58,726.56 L483.48,725.78 L485.47,724.97 L487.57,724.11 L489.78,723.22 L492.11,722.28 L494.55,721.30 L497.11,720.28 L499.80,719.21 L502.63,718.09 L505.59,716.93 L508.70,715.71 L511.95,714.45 L515.36,713.14 L518.92,711.78 L522.65,710.36 L526.55,708.90 L530.62,707.38 L534.87,705.81 L539.29,704.18 L543.91,702.51 L548.71,700.78 L553.70,699.01 L558.89,697.18 L564.28,695.31 L569.87,693.39 L575.66,691.43 L581.65,689.43 L587.84,687.38 L594.23,685.31 L600.82,683.20 L607.62,681.06 L614.60,678.89 L621.78,676.71 L629.14,674.50 L636.68,672.29 L644.40,670.06 L652.29,667.83 L660.33,665.61 L668.52,663.39 L676.85,661.18 L685.31,658.99 L693.89,656.83 L702.56,654.69 L711.33,652.58 L720.18,650.51 L729.08,648.48 L738.04,646.49 L747.02,644.56 L756.03,642.67 L765.03,640.84 L774.02,639.07 L782.99,637.37 L791.90,635.72 L800.76,634.14 L809.55,632.62 L818.25,631.18 L826.85,629.80 L835.33,628.48 L843.69,627.23 L851.91,626.05 L859.99,624.94 L867.91,623.88 L875.67,622.89 L883.25,621.96 L890.66,621.09 L897.88,620.28 L904.91,619.52 L911.74,618.81 L918.38,618.16 L924.82,617.55 L931.06,616.98 L937.10,616.46 L942.94,615.98 L948.57,615.53 L954.01,615.13 L959.24,614.75 L964.29,614.41 L969.13,614.09 L973.79,613.80 L978.27,613.54 L982.56,613.30 L986.67,613.08 L990.61,612.88 L994.38,612.70 L997.99,612.53 L1001.44,612.38 L1004.73,612.24 L1007.88,612.12 L1010.88,612.01 L1013.74,611.91 L1016.46,611.82 L1019.06,611.73 L1021.53,611.66 L1023.89,611.59 L1026.12,611.53 L1028.25,611.48 L1030.28,611.43 L1032.20,611.38 L1034.03,611.34 L1035.76,611.31 L1037.41,611.28 L1038.97,611.25 L1040.45,611.22 L1041.86,611.20 L1043.19,611.18 L1044.46,611.16 L1045.66,611.14 L1046.79,611.13 L1047.87,611.11 L1048.89,611.10 L1049.85,611.09 L1050.77,611.08 L1051.63,611.07 L1052.45,611.07 L1053.23,611.06 L1053.96,611.05 L1054.65,611.05 L1055.31,611.04 L1055.93,611.04 L1056.52,611.03 L1057.07,611.03 L1057.60,611.03 L1058.10,611.02 L1058.57,611.02 L1059.01,611.02 L1059.43,611.02 L1059.83,611.01 L1060.20,611.01 L1060.56,611.01 L1060.89,611.01 L1061.21,611.01 L1061.51,611.01 L1061.79,611.01 L1062.06,611.01 L1062.31,611.01 L1062.55,611.01 L1062.77,611.00 L1062.99,611.00 L1063.19,611.00 L1063.38,611.00 L1063.56,611.00 L1063.73,611.00 L1063.89,611.00 L1064.04,611.00 L1064.18,611.00 L1064.32,611.00 L1064.44,611.00 L1064.56,611.00 L1064.68,611.00 L1064.78,611.00 L1064.89,611.00 L1064.98,611.00 L1065.07,611.00 L1065.16,611.00 L1065.24,611.00 L1065.31,611.00 L1065.39,611.00 L1065.45,611.00 L1065.52,611.00 L1065.58,611.00 L1065.63,611.00 L1065.69,611.00 L1065.74,611.00 L1065.79,611.00 L1065.83,611.00 L1065.88,611.00 L1065.92,611.00 L1065.95,611.00 L1066.60,611.00"/>
<path d="M490.92,409.51 L491.37,409.87 L491.40,409.89 L491.43,409.91 L491.46,409.94 L491.49,409.96 L491.52,409.99 L491.56,410.02 L491.59,410.05 L491.63,410.08 L491.68,410.11 L491.72,410.15 L491.77,410.19 L491.82,410.23 L491.87,410.27 L491.93,410.31 L491.99,410.36 L492.05,410.41 L492.12,410.46 L492.19,410.52 L492.26,410.58 L492.34,410.64 L492.42,410.71 L492.51,410.78 L492.61,410.86 L492.71,410.93 L492.81,411.02 L492.93,411.11 L493.04,411.20 L493.17,411.30 L493.30,411.41 L493.44,411.52 L493.59,411.63 L493.75,411.76 L493.92,411.89 L494.09,412.03 L494.28,412.18 L494.48,412.34 L494.69,412.50 L494.91,412.68 L495.14,412.86 L495.39,413.06 L495.66,413.26 L495.93,413.48 L496.23,413.71 L496.54,413.96 L496.87,414.22 L497.22,414.49 L497.59,414.78 L497.98,415.09 L498.39,415.41 L498.83,415.75 L499.30,416.11 L499.79,416.50 L500.30,416.90 L500.85,417.32 L501.43,417.77 L502.04,418.25 L502.69,418.75 L503.38,419.28 L504.10,419.83 L504.87,420.42 L505.68,421.04 L506.53,421.69 L507.43,422.38 L508.39,423.11 L509.39,423.87 L510.46,424.67 L511.58,425.52 L512.76,426.41 L514.02,427.35 L515.33,428.33 L516.73,429.36 L518.19,430.45 L519.74,431.59 L521.37,432.79 L523.09,434.04 L524.90,435.36 L526.81,436.74 L528.82,438.18 L530.93,439.69 L533.15,441.27 L535.49,442.92 L537.94,444.64 L540.52,446.43 L543.23,448.30 L546.07,450.25 L549.06,452.28 L552.18,454.39 L555.46,456.58 L558.89,458.84 L562.48,461.20 L566.23,463.63 L570.15,466.15 L574.25,468.74 L578.52,471.42 L582.97,474.18 L587.61,477.01 L592.44,479.92 L597.46,482.90 L602.67,485.95 L608.07,489.07 L613.68,492.25 L619.47,495.49 L625.47,498.78 L631.66,502.12 L638.05,505.50 L644.62,508.91 L651.39,512.35 L658.33,515.81 L665.46,519.29 L672.76,522.77 L680.22,526.25 L687.83,529.72 L695.60,533.17 L703.50,536.59 L711.53,539.98 L719.67,543.33 L727.91,546.62 L736.24,549.86 L744.64,553.04 L753.10,556.14 L761.61,559.16 L770.14,562.10 L778.69,564.96 L787.24,567.72 L795.77,570.38 L804.27,572.94 L812.72,575.40 L821.11,577.76 L829.42,580.01 L837.64,582.16 L845.76,584.20 L853.77,586.13 L861.64,587.96 L869.38,589.69 L876.97,591.31 L884.41,592.84 L891.68,594.28 L898.78,595.62 L905.70,596.87 L912.44,598.04 L918.99,599.12 L925.36,600.13 L931.53,601.06 L937.51,601.93 L943.29,602.73 L948.88,603.46 L954.27,604.14 L959.48,604.76 L964.49,605.33 L969.31,605.86 L973.94,606.34 L978.40,606.78 L982.67,607.18 L986.77,607.54 L990.70,607.87 L994.46,608.18 L998.05,608.45 L1001.49,608.70 L1004.78,608.93 L1007.91,609.13 L1010.91,609.32 L1013.76,609.49 L1016.49,609.64 L1019.08,609.78 L1021.55,609.90 L1023.90,610.01 L1026.14,610.11 L1028.26,610.20 L1030.29,610.29 L1032.21,610.36 L1034.03,610.43 L1035.77,610.48 L1037.41,610.54 L1038.98,610.59 L1040.46,610.63 L1041.86,610.67 L1043.20,610.70 L1044.46,610.73 L1045.66,610.76 L1046.79,610.79 L1047.87,610.81 L1048.89,610.83 L1049.85,610.85 L1050.77,610.86 L1051.63,610.88 L1052.45,610.89 L1053.23,610.90 L1053.96,610.91 L1054.65,610.92 L1055.31,610.93 L1055.93,610.94 L1056.52,610.94 L1057.07,610.95 L1057.60,610.96 L1058.10,610.96 L1058.57,610.97 L1059.01,610.97 L1059.43,610.97 L1059.83,610.98 L1060.20,610.98 L1060.56,610.98 L1060.89,610.98 L1061.21,610.98 L1061.51,610.99 L1061.79,610.99 L1062.06,610.99 L1062.31,610.99 L1062.55,610.99 L1062.77,610.99 L1062.99,610.99 L1063.19,610.99 L1063.38,610.99 L1063.56,610.99 L1063.73,611.00 L1063.89,611.00 L1064.04,611.00 L1064.18,611.00 L1064.32,611.00 L1064.44,611.00 L1064.56,611.00 L1064.68,611.00 L1064.78,611.00 L1064.89,611.00 L1064.98,611.00 L1065.07,611.00 L1065.16,611.00 L1065.24,611.00 L1065.31,611.00 L1065.39,611.00 L1065.45,611.00 L1065.52,611.00 L1065.58,611.00 L1065.63,611.00 L1065.69,611.00 L1065.74,611.00 L1065.79,611.00 L1065.83,611.00 L1065.88,611.00 L1065.92,611.00 L1065.95,611.00 L1066.60,611.00"/>
<path d="M490.92,812.49 L491.37,812.13 L491.40,812.11 L491.43,812.09 L491.46,812.06 L491.49,812.04 L491.52,812.01 L491.56,811.98 L491.59,811.95 L491.63,811.92 L491.68,811.89 L491.72,811.85 L491.77,811.81 L491.82,811.77 L491.87,811.73 L491.93,811.69 L491.99,811.64 L492.05,811.59 L492.12,811.54 L492.19,811.48 L492.26,811.42 L492.34,811.36 L492.42,811.29 L492.51,811.22 L492.61,811.14 L492.71,811.07 L492.81,810.98 L492.93,810.89 L493.04,810.80 L493.17,810.70 L493.30,810.59 L493.44,810.48 L493.59,810.37 L493.75,810.24 L493.92,810.11 L494.09,809.97 L494.28,809.82 L494.48,809.66 L494.69,809.50 L494.91,809.32 L495.14,809.14 L495.39,808.94 L495.66,808.74 L495.93,808.52 L496.23,808.29 L496.54,808.04 L496.87,807.78 L497.22,807.51 L497.59,807.22 L497.98,806.91 L498.39,806.59 L498.83,806.25 L499.30,805.89 L499.79,805.50 L500.30,805.10 L500.85,804.68 L501.43,804.23 L502.04,803.75 L502.69,803.25 L503.38,802.72 L504.10,802.17 L504.87,801.58 L505.68,800.96 L506.53,800.31 L507.43,799.62 L508.39,798.89 L509.39,798.13 L510.46,797.33 L511.58,796.48 L512.76,795.59 L514.02,794.65 L515.33,793.67 L516.73,792.64 L518.19,791.55 L519.74,790.41 L521.37,789.21 L523.09,787.96 L524.90,786.64 L526.81,785.26 L528.82,783.82 L530.93,782.31 L533.15,780.73 L535.49,779.08 L537.94,777.36 L540.52,775.57 L543.23,773.70 L546.07,771.75 L549.06,769.72 L552.18,767.61 L555.46,765.42 L558.89,763.16 L562.48,760.80 L566.23,758.37 L570.15,755.85 L574.25,753.26 L578.52,750.58 L582.97,747.82 L587.61,744.99 L592.44,742.08 L597.46,739.10 L602.67,736.05 L608.07,732.93 L613.68,729.75 L619.47,726.51 L625.47,723.22 L631.66,719.88 L638.05,716.50 L644.62,713.09 L651.39,709.65 L658.33,706.19 L665.46,702.71 L672.76,699.23 L680.22,695.75 L687.83,692.28 L695.60,688.83 L703.50,685.41 L711.53,682.02 L719.67,678.67 L727.91,675.38 L736.24,672.14 L744.64,668.96 L753.10,665.86 L761.61,662.84 L770.14,659.90 L778.69,657.04 L787.24,654.28 L795.77,651.62 L804.27,649.06 L812.72,646.60 L821.11,644.24 L829.42,641.99 L837.64,639.84 L845.76,637.80 L853.77,635.87 L861.64,634.04 L869.38,632.31 L876.97,630.69 L884.41,629.16 L891.68,627.72 L898.78,626.38 L905.70,625.13 L912.44,623.96 L918.99,622.88 L925.36,621.87 L931.53,620.94 L937.51,620.07 L943.29,619.27 L948.88,618.54 L954.27,617.86 L959.48,617.24 L964.49,616.67 L969.31,616.14 L973.94,615.66 L978.40,615.22 L982.67,614.82 L986.77,614.46 L990.70,614.13 L994.46,613.82 L998.05,613.55 L1001.49,613.30 L1004.78,613.07 L1007.91,612.87 L1010.91,612.68 L1013.76,612.51 L1016.49,612.36 L1019.08,612.22 L1021.55,612.10 L1023.90,611.99 L1026.14,611.89 L1028.26,611.80 L1030.29,611.71 L1032.21,611.64 L1034.03,611.57 L1035.77,611.52 L1037.41,611.46 L1038.98,611.41 L1040.46,611.37 L1041.86,611.33 L1043.20,611.30 L1044.46,611.27 L1045.66,611.24 L1046.79,611.21 L1047.87,611.19 L1048.89,611.17 L1049.85,611.15 L1050.77,611.14 L1051.63,611.12 L1052.45,611.11 L1053.23,611.10 L1053.96,611.09 L1054.65,611.08 L1055.31,611.07 L1055.93,611.06 L1056.52,611.06 L1057.07,611.05 L1057.60,611.04 L1058.10,611.04 L1058.57,611.03 L1059.01,611.03 L1059.43,611.03 L1059.83,611.02 L1060.20,611.02 L1060.56,611.02 L1060.89,611.02 L1061.21,611.02 L1061.51,611.01 L1061.79,611.01 L1062.06,611.01 L1062.31,611.01 L1062.55,611.01 L1062.77,611.01 L1062.99,611.01 L1063.19,611.01 L1063.38,611.01 L1063.56,611.01 L1063.73,611.00 L1063.89,611.00 L1064.04,611.00 L1064.18,611.00 L1064.32,611.00 L1064.44,611.00 L1064.56,611.00 L1064.68,611.00 L1064.78,611.00 L1064.89,611.00 L1064.98,611.00 L1065.07,611.00 L1065.16,611.00 L1065.24,611.00 L1065.31,611.00 L1065.39,611.00 L1065.45,611.00 L1065.52,611.00 L1065.58,611.00 L1065.63,611.00 L1065.69,611.00 L1065.74,611.00 L1065.79,611.00 L1065.83,611.00 L1065.88,611.00 L1065.92,611.00 L1065.95,611.00 L1066.60,611.00"/>
<path d="M557.94,346.50 L558.23,346.91 L558.25,346.94 L558.27,346.96 L558.29,346.99 L558.31,347.02 L558.33,347.05 L558.35,347.08 L558.38,347.12 L558.40,347.16 L558.43,347.20 L558.46,347.24 L558.49,347.28 L558.52,347.33 L558.56,347.38 L558.59,347.43 L558.63,347.48 L558.67,347.54 L558.72,347.60 L558.76,347.67 L558.81,347.74 L558.86,347.81 L558.92,347.89 L558.98,347.97 L559.04,348.06 L559.10,348.15 L559.17,348.25 L559.24,348.35 L559.32,348.46 L559.40,348.57 L559.49,348.70 L559.58,348.83 L559.68,348.96 L559.78,349.11 L559.89,349.26 L560.01,349.42 L560.13,349.60 L560.26,349.78 L560.39,349.97 L560.54,350.17 L560.69,350.39 L560.86,350.62 L561.03,350.86 L561.21,351.11 L561.40,351.38 L561.61,351.67 L561.83,351.97 L562.06,352.29 L562.30,352.63 L562.56,352.99 L562.83,353.36 L563.12,353.76 L563.42,354.18 L563.75,354.63 L564.09,355.10 L564.45,355.60 L564.83,356.13 L565.24,356.68 L565.67,357.27 L566.12,357.89 L566.61,358.54 L567.12,359.23 L567.65,359.96 L568.23,360.73 L568.83,361.54 L569.47,362.39 L570.14,363.29 L570.86,364.24 L571.62,365.24 L572.42,366.29 L573.26,367.40 L574.16,368.56 L575.11,369.79 L576.11,371.08 L577.16,372.44 L578.28,373.86 L579.46,375.36 L580.71,376.93 L582.03,378.58 L583.42,380.31 L584.89,382.12 L586.45,384.02 L588.08,386.00 L589.81,388.08 L591.64,390.25 L593.56,392.52 L595.59,394.89 L597.72,397.36 L599.97,399.93 L602.34,402.61 L604.83,405.40 L607.46,408.29 L610.21,411.30 L613.11,414.41 L616.15,417.63 L619.34,420.97 L622.69,424.41 L626.20,427.97 L629.87,431.63 L633.72,435.39 L637.74,439.26 L641.93,443.23 L646.31,447.29 L650.88,451.44 L655.63,455.67 L660.57,459.99 L665.70,464.37 L671.03,468.82 L676.55,473.32 L682.26,477.87 L688.16,482.45 L694.24,487.07 L700.51,491.70 L706.95,496.33 L713.57,500.96 L720.35,505.58 L727.28,510.17 L734.37,514.72 L741.59,519.22 L748.94,523.66 L756.40,528.03 L763.96,532.31 L771.61,536.51 L779.33,540.60 L787.11,544.59 L794.93,548.46 L802.78,552.21 L810.64,555.83 L818.50,559.32 L826.33,562.67 L834.13,565.87 L841.88,568.94 L849.57,571.86 L857.17,574.64 L864.68,577.28 L872.09,579.77 L879.38,582.12 L886.54,584.34 L893.57,586.42 L900.45,588.37 L907.17,590.20 L913.73,591.90 L920.13,593.49 L926.35,594.97 L932.40,596.33 L938.27,597.60 L943.95,598.78 L949.46,599.86 L954.78,600.85 L959.91,601.77 L964.86,602.61 L969.63,603.39 L974.23,604.10 L978.64,604.74 L982.88,605.33 L986.95,605.87 L990.85,606.37 L994.59,606.81 L998.17,607.22 L1001.59,607.59 L1004.86,607.93 L1007.99,608.23 L1010.97,608.50 L1013.82,608.75 L1016.53,608.98 L1019.12,609.18 L1021.58,609.37 L1023.93,609.53 L1026.16,609.68 L1028.28,609.82 L1030.30,609.94 L1032.22,610.05 L1034.05,610.15 L1035.78,610.24 L1037.42,610.31 L1038.98,610.39 L1040.46,610.45 L1041.87,610.51 L1043.20,610.56 L1044.46,610.61 L1045.66,610.65 L1046.80,610.68 L1047.87,610.72 L1048.89,610.75 L1049.86,610.77 L1050.77,610.80 L1051.63,610.82 L1052.45,610.84 L1053.23,610.86 L1053.96,610.87 L1054.65,610.89 L1055.31,610.90 L1055.93,610.91 L1056.52,610.92 L1057.07,610.93 L1057.60,610.93 L1058.10,610.94 L1058.57,610.95 L1059.01,610.95 L1059.43,610.96 L1059.83,610.96 L1060.20,610.97 L1060.56,610.97 L1060.89,610.97 L1061.21,610.98 L1061.51,610.98 L1061.79,610.98 L1062.06,610.98 L1062.31,610.99 L1062.55,610.99 L1062.77,610.99 L1062.99,610.99 L1063.19,610.99 L1063.38,610.99 L1063.56,610.99 L1063.73,610.99 L1063.89,610.99 L1064.04,610.99 L1064.18,611.00 L1064.32,611.00 L1064.44,611.00 L1064.56,611.00 L1064.68,611.00 L1064.78,611.00 L1064.89,611.00 L1064.98,611.00 L1065.07,611.00 L1065.16,611.00 L1065.24,611.00 L1065.31,611.00 L1065.39,611.00 L1065.45,611.00 L1065.52,611.00 L1065.58,611.00 L1065.63,611.00 L1065.69,611.00 L1065.74,611.00 L1065.79,611.00 L1065.83,611.00 L1065.88,611.00 L1065.92,611.00 L1065.95,611.00 L1066.60,611.00"/>
<path d="M557.94,875.50 L558.23,875.09 L558.25,875.06 L558.27,875.04 L558.29,875.01 L558.31,874.98 L558.33,874.95 L558.35,874.92 L558.38,874.88 L558.40,874.84 L558.43,874.80 L558.46,874.76 L558.49,874.72 L558.52,874.67 L558.56,874.62 L558.59,874.57 L558.63,874.52 L558.67,874.46 L558.72,874.40 L558.76,874.33 L558.81,874.26 L558.86,874.19 L558.92,874.11 L558.98,874.03 L559.04,873.94 L559.10,873.85 L559.17,873.75 L559.24,873.65 L559.32,873.54 L559.40,873.43 L559.49,873.30 L559.58,873.17 L559.68,873.04 L559.78,872.89 L559.89,872.74 L560.01,872.58 L560.13,872.40 L560.26,872.22 L560.39,872.03 L560.54,871.83 L560.69,871.61 L560.86,871.38 L561.03,871.14 L561.21,870.89 L561.40,870.62 L561.61,870.33 L561.83,870.03 L562.06,869.71 L562.30,869.37 L562.56,869.01 L562.83,868.64 L563.12,868.24 L563.42,867.82 L563.75,867.37 L564.09,866.90 L564.45,866.40 L564.83,865.87 L565.24,865.32 L565.67,864.73 L566.12,864.11 L566.61,863.46 L567.12,862.77 L567.65,862.04 L568.23,861.27 L568.83,860.46 L569.47,859.61 L570.14,858.71 L570.86,857.76 L571.62,856.76 L572.42,855.71 L573.26,854.60 L574.16,853.44 L575.11,852.21 L576.11,850.92 L577.16,849.56 L578.28,848.14 L579.46,846.64 L580.71,845.07 L582.03,843.42 L583.42,841.69 L584.89,839.88 L586.45,837.98 L588.08,836.00 L589.81,833.92 L591.64,831.75 L593.56,829.48 L595.59,827.11 L597.72,824.64 L599.97,822.07 L602.34,819.39 L604.83,816.60 L607.46,813.71 L610.21,810.70 L613.11,807.59 L616.15,804.37 L619.34,801.03 L622.69,797.59 L626.20,794.03 L629.87,790.37 L633.72,786.61 L637.74,782.74 L641.93,778.77 L646.31,774.71 L650.88,770.56 L655.63,766.33 L660.57,762.01 L665.70,757.63 L671.03,753.18 L676.55,748.68 L682.26,744.13 L688.16,739.55 L694.24,734.93 L700.51,730.30 L706.95,725.67 L713.57,721.04 L720.35,716.42 L727.28,711.83 L734.37,707.28 L741.59,702.78 L748.94,698.34 L756.40,693.97 L763.96,689.69 L771.61,685.49 L779.33,681.40 L787.11,677.41 L794.93,673.54 L802.78,669.79 L810.64,666.17 L818.50,662.68 L826.33,659.33 L834.13,656.13 L841.88,653.06 L849.57,650.14 L857.17,647.36 L864.68,644.72 L872.09,642.23 L879.38,639.88 L886.54,637.66 L893.57,635.58 L900.45,633.63 L907.17,631.80 L913.73,630.10 L920.13,628.51 L926.35,627.03 L932.40,625.67 L938.27,624.40 L943.95,623.22 L949.46,622.14 L954.78,621.15 L959.91,620.23 L964.86,619.39 L969.63,618.61 L974.23,617.90 L978.64,617.26 L982.88,616.67 L986.95,616.13 L990.85,615.63 L994.59,615.19 L998.17,614.78 L1001.59,614.41 L1004.86,614.07 L1007.99,613.77 L1010.97,613.50 L1013.82,613.25 L1016.53,613.02 L1019.12,612.82 L1021.58,612.63 L1023.93,612.47 L1026.16,612.32 L1028.28,612.18 L1030.30,612.06 L1032.22,611.95 L1034.05,611.85 L1035.78,611.76 L1037.42,611.69 L1038.98,611.61 L1040.46,611.55 L1041.87,611.49 L1043.20,611.44 L1044.46,611.39 L1045.66,611.35 L1046.80,611.32 L1047.87,611.28 L1048.89,611.25 L1049.86,611.23 L1050.77,611.20 L1051.63,611.18 L1052.45,611.16 L1053.23,611.14 L1053.96,611.13 L1054.65,611.11 L1055.31,611.10 L1055.93,611.09 L1056.52,611.08 L1057.07,611.07 L1057.60,611.07 L1058.10,611.06 L1058.57,611.05 L1059.01,611.05 L1059.43,611.04 L1059.83,611.04 L1060.20,611.03 L1060.56,611.03 L1060.89,611.03 L1061.21,611.02 L1061.51,611.02 L1061.79,611.02 L1062.06,611.02 L1062.31,611.01 L1062.55,611.01 L1062.77,611.01 L1062.99,611.01 L1063.19,611.01 L1063.38,611.01 L1063.56,611.01 L1063.73,611.01 L1063.89,611.01 L1064.04,611.01 L1064.18,611.00 L1064.32,611.00 L1064.44,611.00 L1064.56,611.00 L1064.68,611.00 L1064.78,611.00 L1064.89,611.00 L1064.98,611.00 L1065.07,611.00 L1065.16,611.00 L1065.24,611.00 L1065.31,611.00 L1065.39,611.00 L1065.45,611.00 L1065.52,611.00 L1065.58,611.00 L1065.63,611.00 L1065.69,611.00 L1065.74,611.00 L1065.79,611.00 L1065.83,611.00 L1065.88,611.00 L1065.92,611.00 L1065.95,611.00 L1066.60,611.00"/>
<path d="M645.05,303.27 L645.17,303.67 L645.18,303.69 L645.19,303.72 L645.20,303.74 L645.21,303.77 L645.22,303.80 L645.23,303.83 L645.24,303.87 L645.25,303.90 L645.26,303.94 L645.27,303.98 L645.29,304.02 L645.30,304.07 L645.32,304.11 L645.33,304.16 L645.35,304.22 L645.37,304.27 L645.39,304.33 L645.41,304.39 L645.43,304.46 L645.45,304.53 L645.48,304.61 L645.50,304.69 L645.53,304.77 L645.56,304.86 L645.59,304.95 L645.62,305.05 L645.66,305.16 L645.69,305.27 L645.73,305.39 L645.77,305.51 L645.82,305.65 L645.86,305.79 L645.91,305.93 L645.96,306.09 L646.02,306.26 L646.07,306.43 L646.13,306.62 L646.20,306.82 L646.27,307.03 L646.34,307.25 L646.42,307.48 L646.50,307.73 L646.59,307.99 L646.68,308.27 L646.78,308.56 L646.88,308.87 L646.99,309.20 L647.11,309.55 L647.23,309.92 L647.36,310.30 L647.50,310.72 L647.65,311.15 L647.81,311.61 L647.97,312.09 L648.15,312.61 L648.34,313.15 L648.54,313.72 L648.75,314.33 L648.97,314.97 L649.21,315.64 L649.46,316.36 L649.73,317.11 L650.01,317.91 L650.32,318.75 L650.64,319.63 L650.98,320.57 L651.34,321.56 L651.73,322.60 L652.14,323.69 L652.57,324.85 L653.03,326.07 L653.53,327.35 L654.05,328.70 L654.60,330.13 L655.20,331.62 L655.82,333.20 L656.49,334.86 L657.20,336.60 L657.96,338.42 L658.76,340.34 L659.62,342.36 L660.53,344.47 L661.50,346.69 L662.52,349.01 L663.62,351.44 L664.78,353.98 L666.02,356.64 L667.34,359.41 L668.74,362.31 L670.22,365.33 L671.80,368.48 L673.48,371.76 L675.27,375.17 L677.16,378.71 L679.16,382.39 L681.29,386.19 L683.55,390.14 L685.94,394.22 L688.47,398.42 L691.14,402.77 L693.97,407.23 L696.95,411.83 L700.10,416.54 L703.42,421.37 L706.91,426.31 L710.58,431.35 L714.43,436.49 L718.46,441.71 L722.69,447.01 L727.11,452.37 L731.72,457.79 L736.52,463.26 L741.51,468.75 L746.69,474.27 L752.06,479.78 L757.61,485.29 L763.33,490.77 L769.23,496.22 L775.28,501.61 L781.48,506.93 L787.83,512.18 L794.30,517.33 L800.89,522.37 L807.58,527.30 L814.36,532.09 L821.22,536.75 L828.12,541.26 L835.07,545.61 L842.05,549.81 L849.03,553.83 L856.01,557.69 L862.96,561.37 L869.87,564.87 L876.72,568.20 L883.51,571.36 L890.22,574.34 L896.83,577.15 L903.33,579.79 L909.72,582.26 L915.98,584.58 L922.11,586.75 L928.09,588.77 L933.92,590.65 L939.60,592.39 L945.11,594.00 L950.47,595.49 L955.65,596.87 L960.67,598.14 L965.53,599.30 L970.21,600.38 L974.72,601.36 L979.07,602.26 L983.25,603.08 L987.27,603.83 L991.12,604.52 L994.82,605.14 L998.37,605.71 L1001.76,606.22 L1005.01,606.69 L1008.11,607.12 L1011.08,607.50 L1013.91,607.85 L1016.61,608.17 L1019.18,608.45 L1021.64,608.71 L1023.98,608.94 L1026.20,609.15 L1028.32,609.34 L1030.33,609.51 L1032.25,609.66 L1034.07,609.80 L1035.80,609.93 L1037.44,610.04 L1039.00,610.14 L1040.48,610.23 L1041.88,610.31 L1043.21,610.38 L1044.47,610.45 L1045.67,610.50 L1046.80,610.56 L1047.88,610.60 L1048.89,610.65 L1049.86,610.68 L1050.77,610.72 L1051.64,610.75 L1052.45,610.77 L1053.23,610.80 L1053.96,610.82 L1054.66,610.84 L1055.31,610.86 L1055.93,610.87 L1056.52,610.89 L1057.07,610.90 L1057.60,610.91 L1058.10,610.92 L1058.57,610.93 L1059.01,610.93 L1059.43,610.94 L1059.83,610.95 L1060.20,610.95 L1060.56,610.96 L1060.89,610.96 L1061.21,610.97 L1061.51,610.97 L1061.79,610.97 L1062.06,610.98 L1062.31,610.98 L1062.55,610.98 L1062.77,610.98 L1062.99,610.99 L1063.19,610.99 L1063.38,610.99 L1063.56,610.99 L1063.73,610.99 L1063.89,610.99 L1064.04,610.99 L1064.18,610.99 L1064.32,610.99 L1064.44,610.99 L1064.56,611.00 L1064.68,611.00 L1064.78,611.00 L1064.89,611.00 L1064.98,611.00 L1065.07,611.00 L1065.16,611.00 L1065.24,611.00 L1065.31,611.00 L1065.39,611.00 L1065.45,611.00 L1065.52,611.00 L1065.58,611.00 L1065.63,611.00 L1065.69,611.00 L1065.74,611.00 L1065.79,611.00 L1065.83,611.00 L1065.88,611.00 L1065.92,611.00 L1065.95,611.00 L1066.60,611.00"/>
<path d="M645.05,918.73 L645.17,918.33 L645.18,918.31 L645.19,918.28 L645.20,918.26 L645.21,918.23 L645.22,918.20 L645.23,918.17 L645.24,918.13 L645.25,918.10 L645.26,918.06 L645.27,918.02 L645.29,917.98 L645.30,917.93 L645.32,917.89 L645.33,917.84 L645.35,917.78 L645.37,917.73 L645.39,917.67 L645.41,917.61 L645.43,917.54 L645.45,917.47 L645.48,917.39 L645.50,917.31 L645.53,917.23 L645.56,917.14 L645.59,917.05 L645.62,916.95 L645.66,916.84 L645.69,916.73 L645.73,916.61 L645.77,916.49 L645.82,916.35 L645.86,916.21 L645.91,916.07 L645.96,915.91 L646.02,915.74 L646.07,915.57 L646.13,915.38 L646.20,915.18 L646.27,914.97 L646.34,914.75 L646.42,914.52 L646.50,914.27 L646.59,914.01 L646.68,913.73 L646.78,913.44 L646.88,913.13 L646.99,912.80 L647.11,912.45 L647.23,912.08 L647.36,911.70 L647.50,911.28 L647.65,910.85 L647.81,910.39 L647.97,909.91 L648.15,909.39 L648.34,908.85 L648.54,908.28 L648.75,907.67 L648.97,907.03 L649.21,906.36 L649.46,905.64 L649.73,904.89 L650.01,904.09 L650.32,903.25 L650.64,902.37 L650.98,901.43 L651.34,900.44 L651.73,899.40 L652.14,898.31 L652.57,897.15 L653.03,895.93 L653.53,894.65 L654.05,893.30 L654.60,891.87 L655.20,890.38 L655.82,888.80 L656.49,887.14 L657.20,885.40 L657.96,883.58 L658.76,881.66 L659.62,879.64 L660.53,877.53 L661.50,875.31 L662.52,872.99 L663.62,870.56 L664.78,868.02 L666.02,865.36 L667.34,862.59 L668.74,859.69 L670.22,856.67 L671.80,853.52 L673.48,850.24 L675.27,846.83 L677.16,843.29 L679.16,839.61 L681.29,835.81 L683.55,831.86 L685.94,827.78 L688.47,823.58 L691.14,819.23 L693.97,814.77 L696.95,810.17 L700.10,805.46 L703.42,800.63 L706.91,795.69 L710.58,790.65 L714.43,785.51 L718.46,780.29 L722.69,774.99 L727.11,769.63 L731.72,764.21 L736.52,758.74 L741.51,753.25 L746.69,747.73 L752.06,742.22 L757.61,736.71 L763.33,731.23 L769.23,725.78 L775.28,720.39 L781.48,715.07 L787.83,709.82 L794.30,704.67 L800.89,699.63 L807.58,694.70 L814.36,689.91 L821.22,685.25 L828.12,680.74 L835.07,676.39 L842.05,672.19 L849.03,668.17 L856.01,664.31 L862.96,660.63 L869.87,657.13 L876.72,653.80 L883.51,650.64 L890.22,647.66 L896.83,644.85 L903.33,642.21 L909.72,639.74 L915.98,637.42 L922.11,635.25 L928.09,633.23 L933.92,631.35 L939.60,629.61 L945.11,628.00 L950.47,626.51 L955.65,625.13 L960.67,623.86 L965.53,622.70 L970.21,621.62 L974.72,620.64 L979.07,619.74 L983.25,618.92 L987.27,618.17 L991.12,617.48 L994.82,616.86 L998.37,616.29 L1001.76,615.78 L1005.01,615.31 L1008.11,614.88 L1011.08,614.50 L1013.91,614.15 L1016.61,613.83 L1019.18,613.55 L1021.64,613.29 L1023.98,613.06 L1026.20,612.85 L1028.32,612.66 L1030.33,612.49 L1032.25,612.34 L1034.07,612.20 L1035.80,612.07 L1037.44,611.96 L1039.00,611.86 L1040.48,611.77 L1041.88,611.69 L1043.21,611.62 L1044.47,611.55 L1045.67,611.50 L1046.80,611.44 L1047.88,611.40 L1048.89,611.35 L1049.86,611.32 L1050.77,611.28 L1051.64,611.25 L1052.45,611.23 L1053.23,611.20 L1053.96,611.18 L1054.66,611.16 L1055.31,611.14 L1055.93,611.13 L1056.52,611.11 L1057.07,611.10 L1057.60,611.09 L1058.10,611.08 L1058.57,611.07 L1059.01,611.07 L1059.43,611.06 L1059.83,611.05 L1060.20,611.05 L1060.56,611.04 L1060.89,611.04 L1061.21,611.03 L1061.51,611.03 L1061.79,611.03 L1062.06,611.02 L1062.31,611.02 L1062.55,611.02 L1062.77,611.02 L1062.99,611.01 L1063.19,611.01 L1063.38,611.01 L1063.56,611.01 L1063.73,611.01 L1063.89,611.01 L1064.04,611.01 L1064.18,611.01 L1064.32,611.01 L1064.44,611.01 L1064.56,611.00 L1064.68,611.00 L1064.78,611.00 L1064.89,611.00 L1064.98,611.00 L1065.07,611.00 L1065.16,611.00 L1065.24,611.00 L1065.31,611.00 L1065.39,611.00 L1065.45,611.00 L1065.52,611.00 L1065.58,611.00 L1065.63,611.00 L1065.69,611.00 L1065.74,611.00 L1065.79,611.00 L1065.83,611.00 L1065.88,611.00 L1065.92,611.00 L1065.95,611.00 L1066.60,611.00"/>
<path d="M743.50,287.90 L743.50,288.22 L743.50,288.24 L743.50,288.26 L743.50,288.28 L743.50,288.31 L743.50,288.33 L743.50,288.36 L743.50,288.38 L743.50,288.41 L743.50,288.44 L743.50,288.47 L743.50,288.51 L743.50,288.54 L743.50,288.58 L743.50,288.62 L743.50,288.67 L743.50,288.71 L743.50,288.76 L743.50,288.81 L743.50,288.86 L743.50,288.92 L743.50,288.98 L743.50,289.04 L743.50,289.11 L743.50,289.18 L743.50,289.26 L743.50,289.34 L743.50,289.43 L743.50,289.52 L743.50,289.61 L743.51,289.71 L743.51,289.82 L743.51,289.93 L743.51,290.05 L743.51,290.18 L743.51,290.31 L743.51,290.46 L743.51,290.61 L743.51,290.77 L743.51,290.94 L743.52,291.11 L743.52,291.30 L743.52,291.50 L743.52,291.72 L743.53,291.94 L743.53,292.18 L743.53,292.43 L743.54,292.70 L743.54,292.98 L743.54,293.28 L743.55,293.59 L743.56,293.93 L743.56,294.28 L743.57,294.66 L743.58,295.05 L743.59,295.47 L743.60,295.91 L743.61,296.38 L743.62,296.88 L743.64,297.40 L743.66,297.96 L743.68,298.54 L743.70,299.16 L743.72,299.82 L743.75,300.51 L743.78,301.24 L743.81,302.01 L743.84,302.83 L743.89,303.69 L743.93,304.60 L743.98,305.56 L744.04,306.57 L744.10,307.64 L744.17,308.77 L744.25,309.97 L744.34,311.22 L744.44,312.55 L744.55,313.95 L744.67,315.42 L744.81,316.97 L744.96,318.60 L745.13,320.32 L745.32,322.13 L745.53,324.03 L745.76,326.03 L746.02,328.14 L746.30,330.34 L746.62,332.66 L746.97,335.09 L747.35,337.64 L747.78,340.32 L748.25,343.11 L748.77,346.04 L749.35,349.10 L749.98,352.30 L750.68,355.64 L751.45,359.12 L752.29,362.74 L753.21,366.52 L754.22,370.44 L755.32,374.51 L756.53,378.73 L757.85,383.11 L759.28,387.63 L760.83,392.30 L762.52,397.11 L764.34,402.07 L766.32,407.16 L768.44,412.39 L770.73,417.74 L773.19,423.20 L775.83,428.77 L778.64,434.44 L781.65,440.20 L784.84,446.03 L788.23,451.92 L791.81,457.86 L795.60,463.83 L799.58,469.81 L803.75,475.79 L808.12,481.76 L812.68,487.69 L817.42,493.57 L822.33,499.38 L827.41,505.11 L832.64,510.74 L838.02,516.25 L843.53,521.64 L849.15,526.88 L854.88,531.96 L860.69,536.88 L866.56,541.63 L872.49,546.20 L878.46,550.57 L884.44,554.76 L890.43,558.74 L896.40,562.54 L902.34,566.13 L908.23,569.52 L914.06,572.73 L919.82,575.74 L925.49,578.56 L931.07,581.20 L936.54,583.67 L941.90,585.96 L947.12,588.10 L952.22,590.08 L957.19,591.91 L962.01,593.60 L966.68,595.16 L971.21,596.60 L975.59,597.92 L979.82,599.13 L983.90,600.24 L987.83,601.25 L991.61,602.18 L995.24,603.02 L998.72,603.79 L1002.07,604.49 L1005.27,605.13 L1008.34,605.70 L1011.27,606.23 L1014.07,606.70 L1016.75,607.13 L1019.30,607.52 L1021.74,607.87 L1024.06,608.19 L1026.28,608.47 L1028.38,608.73 L1030.39,608.96 L1032.29,609.17 L1034.11,609.36 L1035.83,609.53 L1037.47,609.68 L1039.02,609.82 L1040.50,609.94 L1041.90,610.05 L1043.22,610.15 L1044.48,610.24 L1045.68,610.32 L1046.81,610.39 L1047.88,610.46 L1048.90,610.51 L1049.86,610.57 L1050.78,610.61 L1051.64,610.65 L1052.46,610.69 L1053.23,610.72 L1053.96,610.75 L1054.66,610.78 L1055.31,610.80 L1055.93,610.82 L1056.52,610.84 L1057.08,610.86 L1057.60,610.87 L1058.10,610.89 L1058.57,610.90 L1059.01,610.91 L1059.43,610.92 L1059.83,610.93 L1060.20,610.94 L1060.56,610.94 L1060.89,610.95 L1061.21,610.96 L1061.51,610.96 L1061.79,610.96 L1062.06,610.97 L1062.31,610.97 L1062.55,610.97 L1062.77,610.98 L1062.99,610.98 L1063.19,610.98 L1063.38,610.98 L1063.56,610.99 L1063.73,610.99 L1063.89,610.99 L1064.04,610.99 L1064.18,610.99 L1064.32,610.99 L1064.44,610.99 L1064.56,610.99 L1064.68,610.99 L1064.78,610.99 L1064.89,611.00 L1064.98,611.00 L1065.07,611.00 L1065.16,611.00 L1065.24,611.00 L1065.31,611.00 L1065.39,611.00 L1065.45,611.00 L1065.52,611.00 L1065.58,611.00 L1065.63,611.00 L1065.69,611.00 L1065.74,611.00 L1065.79,611.00 L1065.83,611.00 L1065.88,611.00 L1065.92,611.00 L1065.95,611.00 L1066.60,611.00"/>
<path d="M743.50,934.10 L743.50,933.78 L743.50,933.76 L743.50,933.74 L743.50,933.72 L743.50,933.69 L743.50,933.67 L743.50,933.64 L743.50,933.62 L743.50,933.59 L743.50,933.56 L743.50,933.53 L743.50,933.49 L743.50,933.46 L743.50,933.42 L743.50,933.38 L743.50,933.33 L743.50,933.29 L743.50,933.24 L743.50,933.19 L743.50,933.14 L743.50,933.08 L743.50,933.02 L743.50,932.96 L743.50,932.89 L743.50,932.82 L743.50,932.74 L743.50,932.66 L743.50,932.57 L743.50,932.48 L743.50,932.39 L743.51,932.29 L743.51,932.18 L743.51,932.07 L743.51,931.95 L743.51,931.82 L743.51,931.69 L743.51,931.54 L743.51,931.39 L743.51,931.23 L743.51,931.06 L743.52,930.89 L743.52,930.70 L743.52,930.50 L743.52,930.28 L743.53,930.06 L743.53,929.82 L743.53,929.57 L743.54,929.30 L743.54,929.02 L743.54,928.72 L743.55,928.41 L743.56,928.07 L743.56,927.72 L743.57,927.34 L743.58,926.95 L743.59,926.53 L743.60,926.09 L743.61,925.62 L743.62,925.12 L743.64,924.60 L743.66,924.04 L743.68,923.46 L743.70,922.84 L743.72,922.18 L743.75,921.49 L743.78,920.76 L743.81,919.99 L743.84,919.17 L743.89,918.31 L743.93,917.40 L743.98,916.44 L744.04,915.43 L744.10,914.36 L744.17,913.23 L744.25,912.03 L744.34,910.78 L744.44,909.45 L744.55,908.05 L744.67,906.58 L744.81,905.03 L744.96,903.40 L745.13,901.68 L745.32,899.87 L745.53,897.97 L745.76,895.97 L746.02,893.86 L746.30,891.66 L746.62,889.34 L746.97,886.91 L747.35,884.36 L747.78,881.68 L748.25,878.89 L748.77,875.96 L749.35,872.90 L749.98,869.70 L750.68,866.36 L751.45,862.88 L752.29,859.26 L753.21,855.48 L754.22,851.56 L755.32,847.49 L756.53,843.27 L757.85,838.89 L759.28,834.37 L760.83,829.70 L762.52,824.89 L764.34,819.93 L766.32,814.84 L768.44,809.61 L770.73,804.26 L773.19,798.80 L775.83,793.23 L778.64,787.56 L781.65,781.80 L784.84,775.97 L788.23,770.08 L791.81,764.14 L795.60,758.17 L799.58,752.19 L803.75,746.21 L808.12,740.24 L812.68,734.31 L817.42,728.43 L822.33,722.62 L827.41,716.89 L832.64,711.26 L838.02,705.75 L843.53,700.36 L849.15,695.12 L854.88,690.04 L860.69,685.12 L866.56,680.37 L872.49,675.80 L878.46,671.43 L884.44,667.24 L890.43,663.26 L896.40,659.46 L902.34,655.87 L908.23,652.48 L914.06,649.27 L919.82,646.26 L925.49,643.44 L931.07,640.80 L936.54,638.33 L941.90,636.04 L947.12,633.90 L952.22,631.92 L957.19,630.09 L962.01,628.40 L966.68,626.84 L971.21,625.40 L975.59,624.08 L979.82,622.87 L983.90,621.76 L987.83,620.75 L991.61,619.82 L995.24,618.98 L998.72,618.21 L1002.07,617.51 L1005.27,616.87 L1008.34,616.30 L1011.27,615.77 L1014.07,615.30 L1016.75,614.87 L1019.30,614.48 L1021.74,614.13 L1024.06,613.81 L1026.28,613.53 L1028.38,613.27 L1030.39,613.04 L1032.29,612.83 L1034.11,612.64 L1035.83,612.47 L1037.47,612.32 L1039.02,612.18 L1040.50,612.06 L1041.90,611.95 L1043.22,611.85 L1044.48,611.76 L1045.68,611.68 L1046.81,611.61 L1047.88,611.54 L1048.90,611.49 L1049.86,611.43 L1050.78,611.39 L1051.64,611.35 L1052.46,611.31 L1053.23,611.28 L1053.96,611.25 L1054.66,611.22 L1055.31,611.20 L1055.93,611.18 L1056.52,611.16 L1057.08,611.14 L1057.60,611.13 L1058.10,611.11 L1058.57,611.10 L1059.01,611.09 L1059.43,611.08 L1059.83,611.07 L1060.20,611.06 L1060.56,611.06 L1060.89,611.05 L1061.21,611.04 L1061.51,611.04 L1061.79,611.04 L1062.06,611.03 L1062.31,611.03 L1062.55,611.03 L1062.77,611.02 L1062.99,611.02 L1063.19,611.02 L1063.38,611.02 L1063.56,611.01 L1063.73,611.01 L1063.89,611.01 L1064.04,611.01 L1064.18,611.01 L1064.32,611.01 L1064.44,611.01 L1064.56,611.01 L1064.68,611.01 L1064.78,611.01 L1064.89,611.00 L1064.98,611.00 L1065.07,611.00 L1065.16,611.00 L1065.24,611.00 L1065.31,611.00 L1065.39,611.00 L1065.45,611.00 L1065.52,611.00 L1065.58,611.00 L1065.63,611.00 L1065.69,611.00 L1065.74,611.00 L1065.79,611.00 L1065.83,611.00 L1065.88,611.00 L1065.92,611.00 L1065.95,611.00 L1066.60,611.00"/>
<path d="M801.76,293.20 L801.72,293.46 L801.71,293.47 L801.71,293.49 L801.71,293.51 L801.70,293.52 L801.70,293.54 L801.70,293.56 L801.69,293.59 L801.69,293.61 L801.68,293.63 L801.68,293.66 L801.67,293.69 L801.67,293.72 L801.66,293.75 L801.66,293.78 L801.65,293.81 L801.64,293.85 L801.64,293.89 L801.63,293.93 L801.62,293.97 L801.61,294.02 L801.61,294.07 L801.60,294.12 L801.59,294.17 L801.58,294.23 L801.57,294.29 L801.55,294.36 L801.54,294.43 L801.53,294.50 L801.51,294.58 L801.50,294.66 L801.48,294.75 L801.47,294.84 L801.45,294.93 L801.43,295.04 L801.41,295.15 L801.39,295.26 L801.37,295.38 L801.35,295.51 L801.33,295.65 L801.30,295.79 L801.27,295.95 L801.25,296.11 L801.22,296.28 L801.19,296.46 L801.15,296.66 L801.12,296.86 L801.08,297.08 L801.04,297.30 L801.00,297.55 L800.96,297.80 L800.92,298.07 L800.87,298.36 L800.82,298.66 L800.77,298.99 L800.71,299.33 L800.66,299.69 L800.60,300.07 L800.53,300.47 L800.47,300.90 L800.40,301.35 L800.33,301.83 L800.25,302.33 L800.17,302.87 L800.09,303.43 L800.01,304.03 L799.92,304.66 L799.82,305.33 L799.73,306.04 L799.63,306.79 L799.53,307.58 L799.42,308.41 L799.31,309.29 L799.20,310.22 L799.09,311.21 L798.97,312.25 L798.85,313.35 L798.73,314.51 L798.61,315.73 L798.49,317.02 L798.37,318.38 L798.24,319.82 L798.13,321.33 L798.01,322.93 L797.90,324.61 L797.79,326.38 L797.69,328.25 L797.60,330.21 L797.52,332.28 L797.45,334.45 L797.40,336.73 L797.36,339.13 L797.35,341.64 L797.36,344.28 L797.40,347.05 L797.48,349.95 L797.58,352.99 L797.74,356.17 L797.93,359.49 L798.19,362.95 L798.50,366.57 L798.87,370.34 L799.32,374.26 L799.85,378.34 L800.46,382.57 L801.17,386.96 L801.99,391.51 L802.91,396.21 L803.96,401.06 L805.14,406.05 L806.46,411.19 L807.92,416.47 L809.55,421.87 L811.33,427.39 L813.29,433.03 L815.43,438.76 L817.76,444.58 L820.28,450.48 L822.99,456.43 L825.91,462.43 L829.03,468.46 L832.35,474.49 L835.87,480.52 L839.58,486.52 L843.50,492.48 L847.59,498.38 L851.87,504.20 L856.32,509.92 L860.93,515.52 L865.69,521.00 L870.58,526.33 L875.59,531.51 L880.70,536.52 L885.89,541.35 L891.16,546.00 L896.48,550.45 L901.83,554.70 L907.21,558.75 L912.58,562.60 L917.94,566.24 L923.26,569.68 L928.54,572.91 L933.77,575.95 L938.92,578.80 L943.99,581.46 L948.96,583.94 L953.83,586.25 L958.59,588.39 L963.23,590.37 L967.75,592.20 L972.14,593.89 L976.39,595.44 L980.52,596.87 L984.50,598.18 L988.35,599.38 L992.05,600.47 L995.62,601.48 L999.05,602.39 L1002.35,603.22 L1005.51,603.98 L1008.55,604.67 L1011.45,605.29 L1014.23,605.86 L1016.88,606.37 L1019.42,606.83 L1021.84,607.25 L1024.14,607.63 L1026.34,607.97 L1028.44,608.28 L1030.44,608.56 L1032.34,608.81 L1034.14,609.04 L1035.86,609.24 L1037.49,609.42 L1039.04,609.59 L1040.51,609.73 L1041.91,609.87 L1043.24,609.98 L1044.49,610.09 L1045.69,610.19 L1046.82,610.27 L1047.89,610.35 L1048.91,610.42 L1049.87,610.48 L1050.78,610.53 L1051.64,610.58 L1052.46,610.63 L1053.23,610.67 L1053.97,610.70 L1054.66,610.74 L1055.31,610.76 L1055.93,610.79 L1056.52,610.81 L1057.08,610.83 L1057.60,610.85 L1058.10,610.87 L1058.57,610.88 L1059.01,610.89 L1059.43,610.90 L1059.83,610.91 L1060.20,610.92 L1060.56,610.93 L1060.89,610.94 L1061.21,610.95 L1061.51,610.95 L1061.79,610.96 L1062.06,610.96 L1062.31,610.97 L1062.55,610.97 L1062.77,610.97 L1062.99,610.98 L1063.19,610.98 L1063.38,610.98 L1063.56,610.98 L1063.73,610.98 L1063.89,610.99 L1064.04,610.99 L1064.18,610.99 L1064.32,610.99 L1064.44,610.99 L1064.56,610.99 L1064.68,610.99 L1064.78,610.99 L1064.89,610.99 L1064.98,611.00 L1065.07,611.00 L1065.16,611.00 L1065.24,611.00 L1065.31,611.00 L1065.39,611.00 L1065.45,611.00 L1065.52,611.00 L1065.58,611.00 L1065.63,611.00 L1065.69,611.00 L1065.74,611.00 L1065.79,611.00 L1065.83,611.00 L1065.88,611.00 L1065.92,611.00 L1065.95,611.00 L1066.60,611.00"/>
<path d="M801.76,928.80 L801.72,928.54 L801.71,928.53 L801.71,928.51 L801.71,928.49 L801.70,928.48 L801.70,928.46 L801.70,928.44 L801.69,928.41 L801.69,928.39 L801.68,928.37 L801.68,928.34 L801.67,928.31 L801.67,928.28 L801.66,928.25 L801.66,928.22 L801.65,928.19 L801.64,928.15 L801.64,928.11 L801.63,928.07 L801.62,928.03 L801.61,927.98 L801.61,927.93 L801.60,927.88 L801.59,927.83 L801.58,927.77 L801.57,927.71 L801.55,927.64 L801.54,927.57 L801.53,927.50 L801.51,927.42 L801.50,927.34 L801.48,927.25 L801.47,927.16 L801.45,927.07 L801.43,926.96 L801.41,926.85 L801.39,926.74 L801.37,926.62 L801.35,926.49 L801.33,926.35 L801.30,926.21 L801.27,926.05 L801.25,925.89 L801.22,925.72 L801.19,925.54 L801.15,925.34 L801.12,925.14 L801.08,924.92 L801.04,924.70 L801.00,924.45 L800.96,924.20 L800.92,923.93 L800.87,923.64 L800.82,923.34 L800.77,923.01 L800.71,922.67 L800.66,922.31 L800.60,921.93 L800.53,921.53 L800.47,921.10 L800.40,920.65 L800.33,920.17 L800.25,919.67 L800.17,919.13 L800.09,918.57 L800.01,917.97 L799.92,917.34 L799.82,916.67 L799.73,915.96 L799.63,915.21 L799.53,914.42 L799.42,913.59 L799.31,912.71 L799.20,911.78 L799.09,910.79 L798.97,909.75 L798.85,908.65 L798.73,907.49 L798.61,906.27 L798.49,904.98 L798.37,903.62 L798.24,902.18 L798.13,900.67 L798.01,899.07 L797.90,897.39 L797.79,895.62 L797.69,893.75 L797.60,891.79 L797.52,889.72 L797.45,887.55 L797.40,885.27 L797.36,882.87 L797.35,880.36 L797.36,877.72 L797.40,874.95 L797.48,872.05 L797.58,869.01 L797.74,865.83 L797.93,862.51 L798.19,859.05 L798.50,855.43 L798.87,851.66 L799.32,847.74 L799.85,843.66 L800.46,839.43 L801.17,835.04 L801.99,830.49 L802.91,825.79 L803.96,820.94 L805.14,815.95 L806.46,810.81 L807.92,805.53 L809.55,800.13 L811.33,794.61 L813.29,788.97 L815.43,783.24 L817.76,777.42 L820.28,771.52 L822.99,765.57 L825.91,759.57 L829.03,753.54 L832.35,747.51 L835.87,741.48 L839.58,735.48 L843.50,729.52 L847.59,723.62 L851.87,717.80 L856.32,712.08 L860.93,706.48 L865.69,701.00 L870.58,695.67 L875.59,690.49 L880.70,685.48 L885.89,680.65 L891.16,676.00 L896.48,671.55 L901.83,667.30 L907.21,663.25 L912.58,659.40 L917.94,655.76 L923.26,652.32 L928.54,649.09 L933.77,646.05 L938.92,643.20 L943.99,640.54 L948.96,638.06 L953.83,635.75 L958.59,633.61 L963.23,631.63 L967.75,629.80 L972.14,628.11 L976.39,626.56 L980.52,625.13 L984.50,623.82 L988.35,622.62 L992.05,621.53 L995.62,620.52 L999.05,619.61 L1002.35,618.78 L1005.51,618.02 L1008.55,617.33 L1011.45,616.71 L1014.23,616.14 L1016.88,615.63 L1019.42,615.17 L1021.84,614.75 L1024.14,614.37 L1026.34,614.03 L1028.44,613.72 L1030.44,613.44 L1032.34,613.19 L1034.14,612.96 L1035.86,612.76 L1037.49,612.58 L1039.04,612.41 L1040.51,612.27 L1041.91,612.13 L1043.24,612.02 L1044.49,611.91 L1045.69,611.81 L1046.82,611.73 L1047.89,611.65 L1048.91,611.58 L1049.87,611.52 L1050.78,611.47 L1051.64,611.42 L1052.46,611.37 L1053.23,611.33 L1053.97,611.30 L1054.66,611.26 L1055.31,611.24 L1055.93,611.21 L1056.52,611.19 L1057.08,611.17 L1057.60,611.15 L1058.10,611.13 L1058.57,611.12 L1059.01,611.11 L1059.43,611.10 L1059.83,611.09 L1060.20,611.08 L1060.56,611.07 L1060.89,611.06 L1061.21,611.05 L1061.51,611.05 L1061.79,611.04 L1062.06,611.04 L1062.31,611.03 L1062.55,611.03 L1062.77,611.03 L1062.99,611.02 L1063.19,611.02 L1063.38,611.02 L1063.56,611.02 L1063.73,611.02 L1063.89,611.01 L1064.04,611.01 L1064.18,611.01 L1064.32,611.01 L1064.44,611.01 L1064.56,611.01 L1064.68,611.01 L1064.78,611.01 L1064.89,611.01 L1064.98,611.00 L1065.07,611.00 L1065.16,611.00 L1065.24,611.00 L1065.31,611.00 L1065.39,611.00 L1065.45,611.00 L1065.52,611.00 L1065.58,611.00 L1065.63,611.00 L1065.69,611.00 L1065.74,611.00 L1065.79,611.00 L1065.83,611.00 L1065.88,611.00 L1065.92,611.00 L1065.95,611.00 L1066.60,611.00"/>
<path d="M914.19,336.67 L914.11,336.80 L914.11,336.81 L914.10,336.82 L914.10,336.82 L914.09,336.83 L914.09,336.84 L914.08,336.85 L914.07,336.86 L914.07,336.87 L914.06,336.89 L914.05,336.90 L914.04,336.91 L914.03,336.93 L914.02,336.94 L914.01,336.96 L914.00,336.98 L913.99,336.99 L913.98,337.01 L913.97,337.03 L913.95,337.06 L913.94,337.08 L913.93,337.10 L913.91,337.13 L913.89,337.16 L913.87,337.19 L913.86,337.22 L913.84,337.25 L913.82,337.28 L913.79,337.32 L913.77,337.36 L913.74,337.40 L913.72,337.44 L913.69,337.49 L913.66,337.53 L913.63,337.59 L913.59,337.64 L913.56,337.70 L913.52,337.76 L913.48,337.82 L913.44,337.89 L913.40,337.96 L913.35,338.04 L913.30,338.12 L913.25,338.21 L913.19,338.30 L913.13,338.40 L913.07,338.50 L913.01,338.61 L912.94,338.72 L912.86,338.84 L912.79,338.97 L912.70,339.11 L912.62,339.25 L912.53,339.41 L912.43,339.57 L912.33,339.74 L912.22,339.92 L912.10,340.11 L911.98,340.32 L911.86,340.54 L911.72,340.76 L911.58,341.01 L911.43,341.26 L911.27,341.54 L911.11,341.83 L910.93,342.13 L910.74,342.45 L910.55,342.80 L910.34,343.16 L910.13,343.55 L909.90,343.95 L909.66,344.38 L909.40,344.84 L909.14,345.33 L908.86,345.84 L908.57,346.38 L908.26,346.96 L907.93,347.56 L907.59,348.21 L907.24,348.89 L906.87,349.62 L906.48,350.38 L906.07,351.19 L905.64,352.05 L905.20,352.96 L904.73,353.92 L904.25,354.94 L903.74,356.01 L903.22,357.15 L902.68,358.36 L902.12,359.63 L901.53,360.98 L900.93,362.40 L900.31,363.91 L899.68,365.50 L899.02,367.18 L898.35,368.95 L897.67,370.82 L896.97,372.80 L896.26,374.88 L895.55,377.08 L894.83,379.39 L894.11,381.83 L893.39,384.39 L892.68,387.09 L891.98,389.92 L891.30,392.89 L890.64,396.01 L890.02,399.27 L889.43,402.68 L888.88,406.25 L888.40,409.97 L887.97,413.85 L887.62,417.89 L887.35,422.09 L887.17,426.43 L887.10,430.93 L887.15,435.58 L887.32,440.37 L887.63,445.29 L888.09,450.34 L888.71,455.51 L889.50,460.78 L890.47,466.14 L891.63,471.58 L892.98,477.08 L894.53,482.62 L896.29,488.19 L898.25,493.77 L900.41,499.33 L902.78,504.86 L905.34,510.34 L908.10,515.75 L911.04,521.07 L914.16,526.28 L917.45,531.37 L920.88,536.31 L924.45,541.10 L928.14,545.73 L931.93,550.18 L935.81,554.44 L939.76,558.51 L943.76,562.38 L947.80,566.06 L951.85,569.53 L955.91,572.81 L959.96,575.89 L963.98,578.77 L967.96,581.47 L971.88,583.98 L975.75,586.31 L979.54,588.47 L983.25,590.47 L986.87,592.32 L990.40,594.02 L993.83,595.59 L997.16,597.02 L1000.38,598.34 L1003.49,599.54 L1006.49,600.64 L1009.39,601.64 L1012.17,602.55 L1014.84,603.38 L1017.41,604.13 L1019.87,604.81 L1022.22,605.43 L1024.47,605.99 L1026.63,606.49 L1028.68,606.95 L1030.64,607.36 L1032.51,607.73 L1034.29,608.07 L1035.98,608.37 L1037.60,608.64 L1039.13,608.89 L1040.59,609.11 L1041.98,609.30 L1043.29,609.48 L1044.54,609.64 L1045.73,609.78 L1046.85,609.91 L1047.92,610.03 L1048.93,610.13 L1049.89,610.22 L1050.80,610.30 L1051.66,610.38 L1052.47,610.44 L1053.24,610.50 L1053.97,610.56 L1054.67,610.60 L1055.32,610.65 L1055.94,610.68 L1056.53,610.72 L1057.08,610.75 L1057.60,610.77 L1058.10,610.80 L1058.57,610.82 L1059.01,610.84 L1059.43,610.86 L1059.83,610.87 L1060.20,610.89 L1060.56,610.90 L1060.89,610.91 L1061.21,610.92 L1061.51,610.93 L1061.79,610.94 L1062.06,610.94 L1062.31,610.95 L1062.55,610.95 L1062.77,610.96 L1062.99,610.96 L1063.19,610.97 L1063.38,610.97 L1063.56,610.97 L1063.73,610.98 L1063.89,610.98 L1064.04,610.98 L1064.18,610.98 L1064.32,610.99 L1064.44,610.99 L1064.56,610.99 L1064.68,610.99 L1064.78,610.99 L1064.89,610.99 L1064.98,610.99 L1065.07,610.99 L1065.16,610.99 L1065.24,610.99 L1065.31,611.00 L1065.39,611.00 L1065.45,611.00 L1065.52,611.00 L1065.58,611.00 L1065.63,611.00 L1065.69,611.00 L1065.74,611.00 L1065.79,611.00 L1065.83,611.00 L1065.88,611.00 L1065.92,611.00 L1065.95,611.00 L1066.60,611.00"/>
<path d="M914.19,885.33 L914.11,885.20 L914.11,885.19 L914.10,885.18 L914.10,885.18 L914.09,885.17 L914.09,885.16 L914.08,885.15 L914.07,885.14 L914.07,885.13 L914.06,885.11 L914.05,885.10 L914.04,885.09 L914.03,885.07 L914.02,885.06 L914.01,885.04 L914.00,885.02 L913.99,885.01 L913.98,884.99 L913.97,884.97 L913.95,884.94 L913.94,884.92 L913.93,884.90 L913.91,884.87 L913.89,884.84 L913.87,884.81 L913.86,884.78 L913.84,884.75 L913.82,884.72 L913.79,884.68 L913.77,884.64 L913.74,884.60 L913.72,884.56 L913.69,884.51 L913.66,884.47 L913.63,884.41 L913.59,884.36 L913.56,884.30 L913.52,884.24 L913.48,884.18 L913.44,884.11 L913.40,884.04 L913.35,883.96 L913.30,883.88 L913.25,883.79 L913.19,883.70 L913.13,883.60 L913.07,883.50 L913.01,883.39 L912.94,883.28 L912.86,883.16 L912.79,883.03 L912.70,882.89 L912.62,882.75 L912.53,882.59 L912.43,882.43 L912.33,882.26 L912.22,882.08 L912.10,881.89 L911.98,881.68 L911.86,881.46 L911.72,881.24 L911.58,880.99 L911.43,880.74 L911.27,880.46 L911.11,880.17 L910.93,879.87 L910.74,879.55 L910.55,879.20 L910.34,878.84 L910.13,878.45 L909.90,878.05 L909.66,877.62 L909.40,877.16 L909.14,876.67 L908.86,876.16 L908.57,875.62 L908.26,875.04 L907.93,874.44 L907.59,873.79 L907.24,873.11 L906.87,872.38 L906.48,871.62 L906.07,870.81 L905.64,869.95 L905.20,869.04 L904.73,868.08 L904.25,867.06 L903.74,865.99 L903.22,864.85 L902.68,863.64 L902.12,862.37 L901.53,861.02 L900.93,859.60 L900.31,858.09 L899.68,856.50 L899.02,854.82 L898.35,853.05 L897.67,851.18 L896.97,849.20 L896.26,847.12 L895.55,844.92 L894.83,842.61 L894.11,840.17 L893.39,837.61 L892.68,834.91 L891.98,832.08 L891.30,829.11 L890.64,825.99 L890.02,822.73 L889.43,819.32 L888.88,815.75 L888.40,812.03 L887.97,808.15 L887.62,804.11 L887.35,799.91 L887.17,795.57 L887.10,791.07 L887.15,786.42 L887.32,781.63 L887.63,776.71 L888.09,771.66 L888.71,766.49 L889.50,761.22 L890.47,755.86 L891.63,750.42 L892.98,744.92 L894.53,739.38 L896.29,733.81 L898.25,728.23 L900.41,722.67 L902.78,717.14 L905.34,711.66 L908.10,706.25 L911.04,700.93 L914.16,695.72 L917.45,690.63 L920.88,685.69 L924.45,680.90 L928.14,676.27 L931.93,671.82 L935.81,667.56 L939.76,663.49 L943.76,659.62 L947.80,655.94 L951.85,652.47 L955.91,649.19 L959.96,646.11 L963.98,643.23 L967.96,640.53 L971.88,638.02 L975.75,635.69 L979.54,633.53 L983.25,631.53 L986.87,629.68 L990.40,627.98 L993.83,626.41 L997.16,624.98 L1000.38,623.66 L1003.49,622.46 L1006.49,621.36 L1009.39,620.36 L1012.17,619.45 L1014.84,618.62 L1017.41,617.87 L1019.87,617.19 L1022.22,616.57 L1024.47,616.01 L1026.63,615.51 L1028.68,615.05 L1030.64,614.64 L1032.51,614.27 L1034.29,613.93 L1035.98,613.63 L1037.60,613.36 L1039.13,613.11 L1040.59,612.89 L1041.98,612.70 L1043.29,612.52 L1044.54,612.36 L1045.73,612.22 L1046.85,612.09 L1047.92,611.97 L1048.93,611.87 L1049.89,611.78 L1050.80,611.70 L1051.66,611.62 L1052.47,611.56 L1053.24,611.50 L1053.97,611.44 L1054.67,611.40 L1055.32,611.35 L1055.94,611.32 L1056.53,611.28 L1057.08,611.25 L1057.60,611.23 L1058.10,611.20 L1058.57,611.18 L1059.01,611.16 L1059.43,611.14 L1059.83,611.13 L1060.20,611.11 L1060.56,611.10 L1060.89,611.09 L1061.21,611.08 L1061.51,611.07 L1061.79,611.06 L1062.06,611.06 L1062.31,611.05 L1062.55,611.05 L1062.77,611.04 L1062.99,611.04 L1063.19,611.03 L1063.38,611.03 L1063.56,611.03 L1063.73,611.02 L1063.89,611.02 L1064.04,611.02 L1064.18,611.02 L1064.32,611.01 L1064.44,611.01 L1064.56,611.01 L1064.68,611.01 L1064.78,611.01 L1064.89,611.01 L1064.98,611.01 L1065.07,611.01 L1065.16,611.01 L1065.24,611.01 L1065.31,611.00 L1065.39,611.00 L1065.45,611.00 L1065.52,611.00 L1065.58,611.00 L1065.63,611.00 L1065.69,611.00 L1065.74,611.00 L1065.79,611.00 L1065.83,611.00 L1065.88,611.00 L1065.92,611.00 L1065.95,611.00 L1066.60,611.00"/>
<path d="M1001.98,417.14 L1001.93,417.18 L1001.93,417.18 L1001.92,417.18 L1001.92,417.19 L1001.91,417.19 L1001.91,417.19 L1001.91,417.19 L1001.90,417.20 L1001.90,417.20 L1001.89,417.21 L1001.89,417.21 L1001.88,417.21 L1001.88,417.22 L1001.87,417.22 L1001.86,417.23 L1001.86,417.23 L1001.85,417.24 L1001.84,417.24 L1001.83,417.25 L1001.83,417.26 L1001.82,417.26 L1001.81,417.27 L1001.80,417.28 L1001.79,417.29 L1001.77,417.29 L1001.76,417.30 L1001.75,417.31 L1001.74,417.32 L1001.72,417.33 L1001.71,417.35 L1001.69,417.36 L1001.67,417.37 L1001.65,417.39 L1001.64,417.40 L1001.61,417.42 L1001.59,417.43 L1001.57,417.45 L1001.55,417.47 L1001.52,417.49 L1001.49,417.51 L1001.46,417.53 L1001.43,417.55 L1001.40,417.58 L1001.37,417.60 L1001.33,417.63 L1001.29,417.66 L1001.25,417.69 L1001.21,417.72 L1001.16,417.76 L1001.12,417.79 L1001.07,417.83 L1001.01,417.87 L1000.96,417.92 L1000.89,417.96 L1000.83,418.01 L1000.76,418.07 L1000.69,418.12 L1000.62,418.18 L1000.54,418.24 L1000.45,418.31 L1000.36,418.38 L1000.27,418.45 L1000.17,418.53 L1000.06,418.61 L999.95,418.70 L999.83,418.80 L999.70,418.89 L999.57,419.00 L999.43,419.11 L999.28,419.23 L999.13,419.36 L998.96,419.49 L998.79,419.63 L998.60,419.78 L998.41,419.94 L998.20,420.11 L997.98,420.29 L997.75,420.48 L997.51,420.68 L997.25,420.90 L996.98,421.13 L996.69,421.37 L996.39,421.63 L996.08,421.90 L995.74,422.19 L995.39,422.50 L995.02,422.83 L994.63,423.18 L994.21,423.55 L993.78,423.95 L993.33,424.37 L992.85,424.81 L992.35,425.29 L991.82,425.80 L991.26,426.33 L990.68,426.91 L990.08,427.52 L989.44,428.16 L988.77,428.85 L988.08,429.59 L987.35,430.37 L986.59,431.20 L985.80,432.09 L984.98,433.03 L984.13,434.03 L983.24,435.10 L982.33,436.24 L981.38,437.45 L980.40,438.73 L979.39,440.10 L978.36,441.56 L977.30,443.10 L976.21,444.74 L975.11,446.48 L973.99,448.33 L972.85,450.28 L971.71,452.35 L970.57,454.54 L969.43,456.86 L968.30,459.30 L967.18,461.88 L966.10,464.59 L965.05,467.43 L964.04,470.42 L963.09,473.54 L962.21,476.80 L961.41,480.19 L960.69,483.72 L960.08,487.38 L959.59,491.16 L959.22,495.05 L958.98,499.04 L958.90,503.13 L958.97,507.30 L959.21,511.53 L959.63,515.81 L960.22,520.13 L961.00,524.46 L961.96,528.79 L963.10,533.09 L964.43,537.36 L965.93,541.56 L967.60,545.70 L969.42,549.73 L971.40,553.66 L973.52,557.47 L975.75,561.15 L978.10,564.68 L980.54,568.06 L983.06,571.28 L985.65,574.33 L988.28,577.22 L990.94,579.95 L993.62,582.51 L996.31,584.90 L998.99,587.14 L1001.65,589.21 L1004.29,591.14 L1006.88,592.93 L1009.43,594.57 L1011.92,596.09 L1014.36,597.48 L1016.73,598.76 L1019.03,599.92 L1021.26,600.99 L1023.41,601.96 L1025.49,602.85 L1027.50,603.65 L1029.43,604.38 L1031.28,605.04 L1033.05,605.64 L1034.75,606.18 L1036.38,606.67 L1037.93,607.11 L1039.42,607.51 L1040.83,607.87 L1042.18,608.20 L1043.47,608.49 L1044.69,608.75 L1045.85,608.98 L1046.96,609.19 L1048.01,609.38 L1049.01,609.55 L1049.95,609.71 L1050.85,609.84 L1051.70,609.96 L1052.51,610.07 L1053.28,610.17 L1054.00,610.26 L1054.69,610.34 L1055.34,610.41 L1055.96,610.47 L1056.54,610.53 L1057.09,610.58 L1057.62,610.62 L1058.11,610.66 L1058.58,610.70 L1059.02,610.73 L1059.44,610.76 L1059.83,610.79 L1060.21,610.81 L1060.56,610.83 L1060.90,610.85 L1061.21,610.87 L1061.51,610.88 L1061.79,610.89 L1062.06,610.90 L1062.31,610.91 L1062.55,610.92 L1062.77,610.93 L1062.99,610.94 L1063.19,610.95 L1063.38,610.95 L1063.56,610.96 L1063.73,610.96 L1063.89,610.97 L1064.04,610.97 L1064.18,610.97 L1064.32,610.98 L1064.44,610.98 L1064.56,610.98 L1064.68,610.98 L1064.78,610.98 L1064.89,610.99 L1064.98,610.99 L1065.07,610.99 L1065.16,610.99 L1065.24,610.99 L1065.31,610.99 L1065.39,610.99 L1065.45,610.99 L1065.52,610.99 L1065.58,611.00 L1065.63,611.00 L1065.69,611.00 L1065.74,611.00 L1065.79,611.00 L1065.83,611.00 L1065.88,611.00 L1065.92,611.00 L1065.95,611.00 L1066.60,611.00"/>
<path d="M1001.98,804.86 L1001.93,804.82 L1001.93,804.82 L1001.92,804.82 L1001.92,804.81 L1001.91,804.81 L1001.91,804.81 L1001.91,804.81 L1001.90,804.80 L1001.90,804.80 L1001.89,804.79 L1001.89,804.79 L1001.88,804.79 L1001.88,804.78 L1001.87,804.78 L1001.86,804.77 L1001.86,804.77 L1001.85,804.76 L1001.84,804.76 L1001.83,804.75 L1001.83,804.74 L1001.82,804.74 L1001.81,804.73 L1001.80,804.72 L1001.79,804.71 L1001.77,804.71 L1001.76,804.70 L1001.75,804.69 L1001.74,804.68 L1001.72,804.67 L1001.71,804.65 L1001.69,804.64 L1001.67,804.63 L1001.65,804.61 L1001.64,804.60 L1001.61,804.58 L1001.59,804.57 L1001.57,804.55 L1001.55,804.53 L1001.52,804.51 L1001.49,804.49 L1001.46,804.47 L1001.43,804.45 L1001.40,804.42 L1001.37,804.40 L1001.33,804.37 L1001.29,804.34 L1001.25,804.31 L1001.21,804.28 L1001.16,804.24 L1001.12,804.21 L1001.07,804.17 L1001.01,804.13 L1000.96,804.08 L1000.89,804.04 L1000.83,803.99 L1000.76,803.93 L1000.69,803.88 L1000.62,803.82 L1000.54,803.76 L1000.45,803.69 L1000.36,803.62 L1000.27,803.55 L1000.17,803.47 L1000.06,803.39 L999.95,803.30 L999.83,803.20 L999.70,803.11 L999.57,803.00 L999.43,802.89 L999.28,802.77 L999.13,802.64 L998.96,802.51 L998.79,802.37 L998.60,802.22 L998.41,802.06 L998.20,801.89 L997.98,801.71 L997.75,801.52 L997.51,801.32 L997.25,801.10 L996.98,800.87 L996.69,800.63 L996.39,800.37 L996.08,800.10 L995.74,799.81 L995.39,799.50 L995.02,799.17 L994.63,798.82 L994.21,798.45 L993.78,798.05 L993.33,797.63 L992.85,797.19 L992.35,796.71 L991.82,796.20 L991.26,795.67 L990.68,795.09 L990.08,794.48 L989.44,793.84 L988.77,793.15 L988.08,792.41 L987.35,791.63 L986.59,790.80 L985.80,789.91 L984.98,788.97 L984.13,787.97 L983.24,786.90 L982.33,785.76 L981.38,784.55 L980.40,783.27 L979.39,781.90 L978.36,780.44 L977.30,778.90 L976.21,777.26 L975.11,775.52 L973.99,773.67 L972.85,771.72 L971.71,769.65 L970.57,767.46 L969.43,765.14 L968.30,762.70 L967.18,760.12 L966.10,757.41 L965.05,754.57 L964.04,751.58 L963.09,748.46 L962.21,745.20 L961.41,741.81 L960.69,738.28 L960.08,734.62 L959.59,730.84 L959.22,726.95 L958.98,722.96 L958.90,718.87 L958.97,714.70 L959.21,710.47 L959.63,706.19 L960.22,701.87 L961.00,697.54 L961.96,693.21 L963.10,688.91 L964.43,684.64 L965.93,680.44 L967.60,676.30 L969.42,672.27 L971.40,668.34 L973.52,664.53 L975.75,660.85 L978.10,657.32 L980.54,653.94 L983.06,650.72 L985.65,647.67 L988.28,644.78 L990.94,642.05 L993.62,639.49 L996.31,637.10 L998.99,634.86 L1001.65,632.79 L1004.29,630.86 L1006.88,629.07 L1009.43,627.43 L1011.92,625.91 L1014.36,624.52 L1016.73,623.24 L1019.03,622.08 L1021.26,621.01 L1023.41,620.04 L1025.49,619.15 L1027.50,618.35 L1029.43,617.62 L1031.28,616.96 L1033.05,616.36 L1034.75,615.82 L1036.38,615.33 L1037.93,614.89 L1039.42,614.49 L1040.83,614.13 L1042.18,613.80 L1043.47,613.51 L1044.69,613.25 L1045.85,613.02 L1046.96,612.81 L1048.01,612.62 L1049.01,612.45 L1049.95,612.29 L1050.85,612.16 L1051.70,612.04 L1052.51,611.93 L1053.28,611.83 L1054.00,611.74 L1054.69,611.66 L1055.34,611.59 L1055.96,611.53 L1056.54,611.47 L1057.09,611.42 L1057.62,611.38 L1058.11,611.34 L1058.58,611.30 L1059.02,611.27 L1059.44,611.24 L1059.83,611.21 L1060.21,611.19 L1060.56,611.17 L1060.90,611.15 L1061.21,611.13 L1061.51,611.12 L1061.79,611.11 L1062.06,611.10 L1062.31,611.09 L1062.55,611.08 L1062.77,611.07 L1062.99,611.06 L1063.19,611.05 L1063.38,611.05 L1063.56,611.04 L1063.73,611.04 L1063.89,611.03 L1064.04,611.03 L1064.18,611.03 L1064.32,611.02 L1064.44,611.02 L1064.56,611.02 L1064.68,611.02 L1064.78,611.02 L1064.89,611.01 L1064.98,611.01 L1065.07,611.01 L1065.16,611.01 L1065.24,611.01 L1065.31,611.01 L1065.39,611.01 L1065.45,611.01 L1065.52,611.01 L1065.58,611.00 L1065.63,611.00 L1065.69,611.00 L1065.74,611.00 L1065.79,611.00 L1065.83,611.00 L1065.88,611.00 L1065.92,611.00 L1065.95,611.00 L1066.60,611.00"/>
<path d="M1041.75,486.73 L1041.72,486.74 L1041.72,486.74 L1041.72,486.74 L1041.72,486.74 L1041.72,486.74 L1041.72,486.74 L1041.71,486.74 L1041.71,486.75 L1041.71,486.75 L1041.71,486.75 L1041.71,486.75 L1041.70,486.75 L1041.70,486.75 L1041.70,486.75 L1041.69,486.75 L1041.69,486.75 L1041.69,486.75 L1041.69,486.76 L1041.68,486.76 L1041.68,486.76 L1041.67,486.76 L1041.67,486.76 L1041.66,486.76 L1041.66,486.77 L1041.65,486.77 L1041.65,486.77 L1041.64,486.77 L1041.64,486.78 L1041.63,486.78 L1041.62,486.78 L1041.62,486.78 L1041.61,486.79 L1041.60,486.79 L1041.59,486.79 L1041.58,486.80 L1041.57,486.80 L1041.56,486.81 L1041.55,486.81 L1041.54,486.82 L1041.53,486.82 L1041.52,486.83 L1041.50,486.83 L1041.49,486.84 L1041.47,486.84 L1041.46,486.85 L1041.44,486.86 L1041.42,486.87 L1041.40,486.87 L1041.38,486.88 L1041.36,486.89 L1041.34,486.90 L1041.31,486.91 L1041.29,486.92 L1041.26,486.93 L1041.23,486.95 L1041.20,486.96 L1041.17,486.97 L1041.14,486.99 L1041.10,487.00 L1041.06,487.02 L1041.02,487.04 L1040.98,487.06 L1040.94,487.08 L1040.89,487.10 L1040.84,487.12 L1040.78,487.14 L1040.73,487.17 L1040.67,487.19 L1040.60,487.22 L1040.54,487.25 L1040.46,487.28 L1040.39,487.31 L1040.31,487.35 L1040.23,487.39 L1040.14,487.43 L1040.04,487.47 L1039.94,487.52 L1039.84,487.56 L1039.72,487.61 L1039.61,487.67 L1039.48,487.73 L1039.35,487.79 L1039.21,487.85 L1039.06,487.92 L1038.90,488.00 L1038.74,488.08 L1038.56,488.16 L1038.38,488.25 L1038.18,488.34 L1037.97,488.45 L1037.76,488.55 L1037.53,488.67 L1037.28,488.79 L1037.02,488.93 L1036.75,489.07 L1036.47,489.22 L1036.17,489.38 L1035.85,489.55 L1035.51,489.73 L1035.16,489.93 L1034.78,490.14 L1034.39,490.36 L1033.98,490.60 L1033.54,490.86 L1033.08,491.13 L1032.60,491.43 L1032.09,491.74 L1031.56,492.08 L1031.01,492.45 L1030.42,492.84 L1029.81,493.26 L1029.17,493.71 L1028.50,494.19 L1027.80,494.71 L1027.07,495.26 L1026.30,495.86 L1025.51,496.51 L1024.69,497.20 L1023.83,497.94 L1022.95,498.73 L1022.03,499.59 L1021.09,500.50 L1020.12,501.49 L1019.13,502.54 L1018.11,503.67 L1017.07,504.88 L1016.02,506.17 L1014.95,507.55 L1013.88,509.02 L1012.80,510.58 L1011.73,512.25 L1010.67,514.02 L1009.62,515.89 L1008.61,517.87 L1007.63,519.96 L1006.69,522.15 L1005.81,524.46 L1005.00,526.86 L1004.26,529.37 L1003.61,531.97 L1003.05,534.66 L1002.60,537.43 L1002.27,540.28 L1002.06,543.18 L1001.98,546.13 L1002.04,549.12 L1002.24,552.13 L1002.58,555.15 L1003.06,558.16 L1003.69,561.14 L1004.45,564.09 L1005.35,566.98 L1006.37,569.80 L1007.52,572.55 L1008.77,575.21 L1010.12,577.77 L1011.55,580.22 L1013.06,582.56 L1014.63,584.79 L1016.25,586.89 L1017.91,588.87 L1019.60,590.73 L1021.30,592.47 L1023.01,594.09 L1024.72,595.59 L1026.41,596.98 L1028.09,598.27 L1029.73,599.45 L1031.35,600.54 L1032.93,601.54 L1034.47,602.45 L1035.97,603.28 L1037.42,604.04 L1038.82,604.73 L1040.18,605.35 L1041.48,605.92 L1042.73,606.43 L1043.94,606.90 L1045.09,607.31 L1046.19,607.69 L1047.25,608.03 L1048.25,608.34 L1049.21,608.62 L1050.13,608.87 L1051.00,609.09 L1051.83,609.29 L1052.62,609.47 L1053.37,609.63 L1054.08,609.78 L1054.75,609.90 L1055.40,610.02 L1056.00,610.13 L1056.58,610.22 L1057.13,610.30 L1057.64,610.38 L1058.13,610.44 L1058.60,610.50 L1059.04,610.56 L1059.45,610.60 L1059.85,610.65 L1060.22,610.68 L1060.57,610.72 L1060.90,610.75 L1061.22,610.78 L1061.52,610.80 L1061.80,610.82 L1062.06,610.84 L1062.31,610.86 L1062.55,610.87 L1062.78,610.89 L1062.99,610.90 L1063.19,610.91 L1063.38,610.92 L1063.56,610.93 L1063.73,610.94 L1063.89,610.94 L1064.04,610.95 L1064.18,610.95 L1064.32,610.96 L1064.44,610.96 L1064.56,610.97 L1064.68,610.97 L1064.78,610.97 L1064.89,610.98 L1064.98,610.98 L1065.07,610.98 L1065.16,610.98 L1065.24,610.99 L1065.31,610.99 L1065.39,610.99 L1065.45,610.99 L1065.52,610.99 L1065.58,610.99 L1065.63,610.99 L1065.69,610.99 L1065.74,610.99 L1065.79,610.99 L1065.83,611.00 L1065.88,611.00 L1065.92,611.00 L1065.95,611.00 L1066.60,611.00"/>
<path d="M1041.75,735.27 L1041.72,735.26 L1041.72,735.26 L1041.72,735.26 L1041.72,735.26 L1041.72,735.26 L1041.72,735.26 L1041.71,735.26 L1041.71,735.25 L1041.71,735.25 L1041.71,735.25 L1041.71,735.25 L1041.70,735.25 L1041.70,735.25 L1041.70,735.25 L1041.69,735.25 L1041.69,735.25 L1041.69,735.25 L1041.69,735.24 L1041.68,735.24 L1041.68,735.24 L1041.67,735.24 L1041.67,735.24 L1041.66,735.24 L1041.66,735.23 L1041.65,735.23 L1041.65,735.23 L1041.64,735.23 L1041.64,735.22 L1041.63,735.22 L1041.62,735.22 L1041.62,735.22 L1041.61,735.21 L1041.60,735.21 L1041.59,735.21 L1041.58,735.20 L1041.57,735.20 L1041.56,735.19 L1041.55,735.19 L1041.54,735.18 L1041.53,735.18 L1041.52,735.17 L1041.50,735.17 L1041.49,735.16 L1041.47,735.16 L1041.46,735.15 L1041.44,735.14 L1041.42,735.13 L1041.40,735.13 L1041.38,735.12 L1041.36,735.11 L1041.34,735.10 L1041.31,735.09 L1041.29,735.08 L1041.26,735.07 L1041.23,735.05 L1041.20,735.04 L1041.17,735.03 L1041.14,735.01 L1041.10,735.00 L1041.06,734.98 L1041.02,734.96 L1040.98,734.94 L1040.94,734.92 L1040.89,734.90 L1040.84,734.88 L1040.78,734.86 L1040.73,734.83 L1040.67,734.81 L1040.60,734.78 L1040.54,734.75 L1040.46,734.72 L1040.39,734.69 L1040.31,734.65 L1040.23,734.61 L1040.14,734.57 L1040.04,734.53 L1039.94,734.48 L1039.84,734.44 L1039.72,734.39 L1039.61,734.33 L1039.48,734.27 L1039.35,734.21 L1039.21,734.15 L1039.06,734.08 L1038.90,734.00 L1038.74,733.92 L1038.56,733.84 L1038.38,733.75 L1038.18,733.66 L1037.97,733.55 L1037.76,733.45 L1037.53,733.33 L1037.28,733.21 L1037.02,733.07 L1036.75,732.93 L1036.47,732.78 L1036.17,732.62 L1035.85,732.45 L1035.51,732.27 L1035.16,732.07 L1034.78,731.86 L1034.39,731.64 L1033.98,731.40 L1033.54,731.14 L1033.08,730.87 L1032.60,730.57 L1032.09,730.26 L1031.56,729.92 L1031.01,729.55 L1030.42,729.16 L1029.81,728.74 L1029.17,728.29 L1028.50,727.81 L1027.80,727.29 L1027.07,726.74 L1026.30,726.14 L1025.51,725.49 L1024.69,724.80 L1023.83,724.06 L1022.95,723.27 L1022.03,722.41 L1021.09,721.50 L1020.12,720.51 L1019.13,719.46 L1018.11,718.33 L1017.07,717.12 L1016.02,715.83 L1014.95,714.45 L1013.88,712.98 L1012.80,711.42 L1011.73,709.75 L1010.67,707.98 L1009.62,706.11 L1008.61,704.13 L1007.63,702.04 L1006.69,699.85 L1005.81,697.54 L1005.00,695.14 L1004.26,692.63 L1003.61,690.03 L1003.05,687.34 L1002.60,684.57 L1002.27,681.72 L1002.06,678.82 L1001.98,675.87 L1002.04,672.88 L1002.24,669.87 L1002.58,666.85 L1003.06,663.84 L1003.69,660.86 L1004.45,657.91 L1005.35,655.02 L1006.37,652.20 L1007.52,649.45 L1008.77,646.79 L1010.12,644.23 L1011.55,641.78 L1013.06,639.44 L1014.63,637.21 L1016.25,635.11 L1017.91,633.13 L1019.60,631.27 L1021.30,629.53 L1023.01,627.91 L1024.72,626.41 L1026.41,625.02 L1028.09,623.73 L1029.73,622.55 L1031.35,621.46 L1032.93,620.46 L1034.47,619.55 L1035.97,618.72 L1037.42,617.96 L1038.82,617.27 L1040.18,616.65 L1041.48,616.08 L1042.73,615.57 L1043.94,615.10 L1045.09,614.69 L1046.19,614.31 L1047.25,613.97 L1048.25,613.66 L1049.21,613.38 L1050.13,613.13 L1051.00,612.91 L1051.83,612.71 L1052.62,612.53 L1053.37,612.37 L1054.08,612.22 L1054.75,612.10 L1055.40,611.98 L1056.00,611.87 L1056.58,611.78 L1057.13,611.70 L1057.64,611.62 L1058.13,611.56 L1058.60,611.50 L1059.04,611.44 L1059.45,611.40 L1059.85,611.35 L1060.22,611.32 L1060.57,611.28 L1060.90,611.25 L1061.22,611.22 L1061.52,611.20 L1061.80,611.18 L1062.06,611.16 L1062.31,611.14 L1062.55,611.13 L1062.78,611.11 L1062.99,611.10 L1063.19,611.09 L1063.38,611.08 L1063.56,611.07 L1063.73,611.06 L1063.89,611.06 L1064.04,611.05 L1064.18,611.05 L1064.32,611.04 L1064.44,611.04 L1064.56,611.03 L1064.68,611.03 L1064.78,611.03 L1064.89,611.02 L1064.98,611.02 L1065.07,611.02 L1065.16,611.02 L1065.24,611.01 L1065.31,611.01 L1065.39,611.01 L1065.45,611.01 L1065.52,611.01 L1065.58,611.01 L1065.63,611.01 L1065.69,611.01 L1065.74,611.01 L1065.79,611.01 L1065.83,611.00 L1065.88,611.00 L1065.92,611.00 L1065.95,611.00 L1066.60,611.00"/>
<path d="M1063.74,568.11 L1063.74,568.11 L1063.74,568.11 L1063.74,568.11 L1063.74,568.11 L1063.74,568.11 L1063.74,568.11 L1063.74,568.11 L1063.74,568.11 L1063.74,568.11 L1063.74,568.11 L1063.74,568.11 L1063.74,568.11 L1063.74,568.11 L1063.73,568.11 L1063.73,568.11 L1063.73,568.11 L1063.73,568.11 L1063.73,568.11 L1063.73,568.11 L1063.73,568.11 L1063.73,568.11 L1063.73,568.11 L1063.73,568.11 L1063.73,568.11 L1063.73,568.11 L1063.73,568.11 L1063.73,568.11 L1063.73,568.11 L1063.73,568.11 L1063.73,568.11 L1063.72,568.11 L1063.72,568.11 L1063.72,568.11 L1063.72,568.11 L1063.72,568.11 L1063.72,568.11 L1063.72,568.11 L1063.72,568.11 L1063.72,568.11 L1063.71,568.11 L1063.71,568.11 L1063.71,568.11 L1063.71,568.11 L1063.71,568.12 L1063.71,568.12 L1063.70,568.12 L1063.70,568.12 L1063.70,568.12 L1063.70,568.12 L1063.69,568.12 L1063.69,568.12 L1063.69,568.12 L1063.68,568.12 L1063.68,568.12 L1063.68,568.12 L1063.67,568.12 L1063.67,568.12 L1063.67,568.12 L1063.66,568.12 L1063.66,568.12 L1063.65,568.12 L1063.65,568.12 L1063.64,568.12 L1063.63,568.13 L1063.63,568.13 L1063.62,568.13 L1063.61,568.13 L1063.61,568.13 L1063.60,568.13 L1063.59,568.13 L1063.58,568.13 L1063.57,568.13 L1063.56,568.14 L1063.55,568.14 L1063.54,568.14 L1063.53,568.14 L1063.52,568.14 L1063.50,568.14 L1063.49,568.15 L1063.47,568.15 L1063.46,568.15 L1063.44,568.15 L1063.42,568.16 L1063.40,568.16 L1063.38,568.16 L1063.36,568.16 L1063.34,568.17 L1063.32,568.17 L1063.29,568.18 L1063.27,568.18 L1063.24,568.18 L1063.21,568.19 L1063.18,568.19 L1063.14,568.20 L1063.11,568.20 L1063.07,568.21 L1063.03,568.22 L1062.99,568.22 L1062.95,568.23 L1062.90,568.24 L1062.85,568.25 L1062.80,568.26 L1062.74,568.27 L1062.68,568.28 L1062.62,568.29 L1062.55,568.30 L1062.48,568.32 L1062.41,568.33 L1062.33,568.35 L1062.25,568.36 L1062.16,568.38 L1062.07,568.40 L1061.97,568.42 L1061.87,568.45 L1061.76,568.47 L1061.64,568.50 L1061.52,568.53 L1061.39,568.56 L1061.25,568.59 L1061.11,568.63 L1060.96,568.67 L1060.80,568.72 L1060.63,568.77 L1060.45,568.82 L1060.26,568.88 L1060.06,568.94 L1059.85,569.01 L1059.62,569.08 L1059.39,569.16 L1059.14,569.25 L1058.89,569.35 L1058.61,569.46 L1058.33,569.57 L1058.03,569.70 L1057.71,569.84 L1057.38,569.99 L1057.04,570.16 L1056.68,570.34 L1056.30,570.54 L1055.91,570.76 L1055.50,571.00 L1055.08,571.26 L1054.64,571.55 L1054.18,571.86 L1053.72,572.20 L1053.23,572.57 L1052.74,572.97 L1052.24,573.41 L1051.72,573.88 L1051.20,574.40 L1050.68,574.95 L1050.16,575.55 L1049.64,576.19 L1049.12,576.87 L1048.61,577.61 L1048.12,578.39 L1047.65,579.22 L1047.20,580.09 L1046.78,581.01 L1046.40,581.98 L1046.06,582.99 L1045.76,584.03 L1045.50,585.11 L1045.31,586.21 L1045.16,587.34 L1045.08,588.48 L1045.06,589.64 L1045.10,590.80 L1045.20,591.95 L1045.37,593.10 L1045.59,594.22 L1045.87,595.33 L1046.21,596.40 L1046.59,597.44 L1047.02,598.44 L1047.49,599.40 L1048.00,600.32 L1048.53,601.18 L1049.08,602.00 L1049.66,602.76 L1050.25,603.48 L1050.85,604.15 L1051.45,604.77 L1052.05,605.34 L1052.65,605.87 L1053.24,606.36 L1053.83,606.80 L1054.40,607.21 L1054.96,607.58 L1055.51,607.92 L1056.04,608.23 L1056.55,608.51 L1057.04,608.76 L1057.52,608.99 L1057.98,609.20 L1058.42,609.38 L1058.84,609.55 L1059.24,609.70 L1059.62,609.84 L1059.99,609.96 L1060.34,610.07 L1060.67,610.17 L1060.99,610.26 L1061.29,610.34 L1061.58,610.41 L1061.85,610.47 L1062.11,610.53 L1062.35,610.58 L1062.58,610.62 L1062.80,610.66 L1063.01,610.70 L1063.21,610.73 L1063.40,610.76 L1063.57,610.79 L1063.74,610.81 L1063.90,610.83 L1064.05,610.85 L1064.19,610.86 L1064.32,610.88 L1064.45,610.89 L1064.57,610.90 L1064.68,610.91 L1064.79,610.92 L1064.89,610.93 L1064.98,610.94 L1065.07,610.95 L1065.16,610.95 L1065.24,610.96 L1065.31,610.96 L1065.39,610.97 L1065.45,610.97 L1065.52,610.97 L1065.58,610.98 L1065.64,610.98 L1065.69,610.98 L1065.74,610.98 L1065.79,610.98 L1065.83,610.99 L1065.88,610.99 L1065.92,610.99 L1065.95,610.99 L1066.60,611.00"/>
<path d="M1063.74,653.89 L1063.74,653.89 L1063.74,653.89 L1063.74,653.89 L1063.74,653.89 L1063.74,653.89 L1063.74,653.89 L1063.74,653.89 L1063.74,653.89 L1063.74,653.89 L1063.74,653.89 L1063.74,653.89 L1063.74,653.89 L1063.74,653.89 L1063.73,653.89 L1063.73,653.89 L1063.73,653.89 L1063.73,653.89 L1063.73,653.89 L1063.73,653.89 L1063.73,653.89 L1063.73,653.89 L1063.73,653.89 L1063.73,653.89 L1063.73,653.89 L1063.73,653.89 L1063.73,653.89 L1063.73,653.89 L1063.73,653.89 L1063.73,653.89 L1063.73,653.89 L1063.72,653.89 L1063.72,653.89 L1063.72,653.89 L1063.72,653.89 L1063.72,653.89 L1063.72,653.89 L1063.72,653.89 L1063.72,653.89 L1063.72,653.89 L1063.71,653.89 L1063.71,653.89 L1063.71,653.89 L1063.71,653.89 L1063.71,653.88 L1063.71,653.88 L1063.70,653.88 L1063.70,653.88 L1063.70,653.88 L1063.70,653.88 L1063.69,653.88 L1063.69,653.88 L1063.69,653.88 L1063.68,653.88 L1063.68,653.88 L1063.68,653.88 L1063.67,653.88 L1063.67,653.88 L1063.67,653.88 L1063.66,653.88 L1063.66,653.88 L1063.65,653.88 L1063.65,653.88 L1063.64,653.88 L1063.63,653.87 L1063.63,653.87 L1063.62,653.87 L1063.61,653.87 L1063.61,653.87 L1063.60,653.87 L1063.59,653.87 L1063.58,653.87 L1063.57,653.87 L1063.56,653.86 L1063.55,653.86 L1063.54,653.86 L1063.53,653.86 L1063.52,653.86 L1063.50,653.86 L1063.49,653.85 L1063.47,653.85 L1063.46,653.85 L1063.44,653.85 L1063.42,653.84 L1063.40,653.84 L1063.38,653.84 L1063.36,653.84 L1063.34,653.83 L1063.32,653.83 L1063.29,653.82 L1063.27,653.82 L1063.24,653.82 L1063.21,653.81 L1063.18,653.81 L1063.14,653.80 L1063.11,653.80 L1063.07,653.79 L1063.03,653.78 L1062.99,653.78 L1062.95,653.77 L1062.90,653.76 L1062.85,653.75 L1062.80,653.74 L1062.74,653.73 L1062.68,653.72 L1062.62,653.71 L1062.55,653.70 L1062.48,653.68 L1062.41,653.67 L1062.33,653.65 L1062.25,653.64 L1062.16,653.62 L1062.07,653.60 L1061.97,653.58 L1061.87,653.55 L1061.76,653.53 L1061.64,653.50 L1061.52,653.47 L1061.39,653.44 L1061.25,653.41 L1061.11,653.37 L1060.96,653.33 L1060.80,653.28 L1060.63,653.23 L1060.45,653.18 L1060.26,653.12 L1060.06,653.06 L1059.85,652.99 L1059.62,652.92 L1059.39,652.84 L1059.14,652.75 L1058.89,652.65 L1058.61,652.54 L1058.33,652.43 L1058.03,652.30 L1057.71,652.16 L1057.38,652.01 L1057.04,651.84 L1056.68,651.66 L1056.30,651.46 L1055.91,651.24 L1055.50,651.00 L1055.08,650.74 L1054.64,650.45 L1054.18,650.14 L1053.72,649.80 L1053.23,649.43 L1052.74,649.03 L1052.24,648.59 L1051.72,648.12 L1051.20,647.60 L1050.68,647.05 L1050.16,646.45 L1049.64,645.81 L1049.12,645.13 L1048.61,644.39 L1048.12,643.61 L1047.65,642.78 L1047.20,641.91 L1046.78,640.99 L1046.40,640.02 L1046.06,639.01 L1045.76,637.97 L1045.50,636.89 L1045.31,635.79 L1045.16,634.66 L1045.08,633.52 L1045.06,632.36 L1045.10,631.20 L1045.20,630.05 L1045.37,628.90 L1045.59,627.78 L1045.87,626.67 L1046.21,625.60 L1046.59,624.56 L1047.02,623.56 L1047.49,622.60 L1048.00,621.68 L1048.53,620.82 L1049.08,620.00 L1049.66,619.24 L1050.25,618.52 L1050.85,617.85 L1051.45,617.23 L1052.05,616.66 L1052.65,616.13 L1053.24,615.64 L1053.83,615.20 L1054.40,614.79 L1054.96,614.42 L1055.51,614.08 L1056.04,613.77 L1056.55,613.49 L1057.04,613.24 L1057.52,613.01 L1057.98,612.80 L1058.42,612.62 L1058.84,612.45 L1059.24,612.30 L1059.62,612.16 L1059.99,612.04 L1060.34,611.93 L1060.67,611.83 L1060.99,611.74 L1061.29,611.66 L1061.58,611.59 L1061.85,611.53 L1062.11,611.47 L1062.35,611.42 L1062.58,611.38 L1062.80,611.34 L1063.01,611.30 L1063.21,611.27 L1063.40,611.24 L1063.57,611.21 L1063.74,611.19 L1063.90,611.17 L1064.05,611.15 L1064.19,611.14 L1064.32,611.12 L1064.45,611.11 L1064.57,611.10 L1064.68,611.09 L1064.79,611.08 L1064.89,611.07 L1064.98,611.06 L1065.07,611.05 L1065.16,611.05 L1065.24,611.04 L1065.31,611.04 L1065.39,611.03 L1065.45,611.03 L1065.52,611.03 L1065.58,611.02 L1065.64,611.02 L1065.69,611.02 L1065.74,611.02 L1065.79,611.02 L1065.83,611.01 L1065.88,611.01 L1065.92,611.01 L1065.95,611.01 L1066.60,611.00"/>
</g>
<circle cx="743.5" cy="611.0" r="323.1" fill="none" stroke="#3c3c3c" stroke-width="1.25"/>
<path d="M420.4,611.0H1066.6" stroke="#000" stroke-width="2"/>
<text transform="translate(474.60,607.50) rotate(-90)" dominant-baseline="central" style="font-family:Liberation Sans;font-size:11px;fill:#333;stroke:#fff;stroke-width:2.5px;paint-order:stroke;stroke-linejoin:round">4,55</text>
<text transform="translate(532.85,607.50) rotate(-90)" dominant-baseline="central" style="font-family:Liberation Sans;font-size:11px;fill:#333;stroke:#fff;stroke-width:2.5px;paint-order:stroke;stroke-linejoin:round">10,5</text>
<text transform="translate(588.23,607.50) rotate(-90)" dominant-baseline="central" style="font-family:Liberation Sans;font-size:11px;fill:#333;stroke:#fff;stroke-width:2.5px;paint-order:stroke;stroke-linejoin:round">17,5</text>
<text transform="translate(641.77,607.50) rotate(-90)" dominant-baseline="central" style="font-family:Liberation Sans;font-size:11px;fill:#333;stroke:#fff;stroke-width:2.5px;paint-order:stroke;stroke-linejoin:round">26</text>
<text transform="translate(693.37,607.50) rotate(-90)" dominant-baseline="central" style="font-family:Liberation Sans;font-size:11px;fill:#333;stroke:#fff;stroke-width:2.5px;paint-order:stroke;stroke-linejoin:round">36,5</text>
<text transform="translate(743.80,607.50) rotate(-90)" dominant-baseline="central" style="font-family:Liberation Sans;font-size:11px;fill:#333;stroke:#fff;stroke-width:2.5px;paint-order:stroke;stroke-linejoin:round">50</text>
<text transform="translate(773.17,607.50) rotate(-90)" dominant-baseline="central" style="font-family:Liberation Sans;font-size:11px;fill:#333;stroke:#fff;stroke-width:2.5px;paint-order:stroke;stroke-linejoin:round">60</text>
<text transform="translate(836.11,607.50) rotate(-90)" dominant-baseline="central" style="font-family:Liberation Sans;font-size:11px;fill:#333;stroke:#fff;stroke-width:2.5px;paint-order:stroke;stroke-linejoin:round">90</text>
<text transform="translate(905.35,607.50) rotate(-90)" dominant-baseline="central" style="font-family:Liberation Sans;font-size:11px;fill:#333;stroke:#fff;stroke-width:2.5px;paint-order:stroke;stroke-linejoin:round">150</text>
<text transform="translate(959.20,607.50) rotate(-90)" dominant-baseline="central" style="font-family:Liberation Sans;font-size:11px;fill:#333;stroke:#fff;stroke-width:2.5px;paint-order:stroke;stroke-linejoin:round">250</text>
<text transform="translate(1026.51,607.50) rotate(-90)" dominant-baseline="central" style="font-family:Liberation Sans;font-size:11px;fill:#333;stroke:#fff;stroke-width:2.5px;paint-order:stroke;stroke-linejoin:round">750</text>
<text transform="translate(429.43,554.55) rotate(10.40)" text-anchor="start" dominant-baseline="central" style="font-family:Liberation Sans;font-size:11px;fill:#333;stroke:#fff;stroke-width:2.5px;paint-order:stroke;stroke-linejoin:round">4,55</text>
<text transform="translate(429.64,668.60) rotate(-10.40)" text-anchor="start" dominant-baseline="central" style="font-family:Liberation Sans;font-size:11px;fill:#333;stroke:#fff;stroke-width:2.5px;paint-order:stroke;stroke-linejoin:round">-4,55</text>
<text transform="translate(450.30,485.03) rotate(23.72)" text-anchor="start" dominant-baseline="central" style="font-family:Liberation Sans;font-size:11px;fill:#333;stroke:#fff;stroke-width:2.5px;paint-order:stroke;stroke-linejoin:round">10,5</text>
<text transform="translate(451.36,739.36) rotate(-23.72)" text-anchor="start" dominant-baseline="central" style="font-family:Liberation Sans;font-size:11px;fill:#333;stroke:#fff;stroke-width:2.5px;paint-order:stroke;stroke-linejoin:round">-10,5</text>
<text transform="translate(491.52,415.18) rotate(38.58)" text-anchor="start" dominant-baseline="central" style="font-family:Liberation Sans;font-size:11px;fill:#333;stroke:#fff;stroke-width:2.5px;paint-order:stroke;stroke-linejoin:round">17,5</text>
<text transform="translate(494.05,809.99) rotate(-38.58)" text-anchor="start" dominant-baseline="central" style="font-family:Liberation Sans;font-size:11px;fill:#333;stroke:#fff;stroke-width:2.5px;paint-order:stroke;stroke-linejoin:round">-17,5</text>
<text transform="translate(555.88,352.83) rotate(54.95)" text-anchor="start" dominant-baseline="central" style="font-family:Liberation Sans;font-size:11px;fill:#333;stroke:#fff;stroke-width:2.5px;paint-order:stroke;stroke-linejoin:round">26</text>
<text transform="translate(560.24,872.23) rotate(-54.95)" text-anchor="start" dominant-baseline="central" style="font-family:Liberation Sans;font-size:11px;fill:#333;stroke:#fff;stroke-width:2.5px;paint-order:stroke;stroke-linejoin:round">-26</text>
<text transform="translate(640.37,308.96) rotate(72.26)" text-anchor="start" dominant-baseline="central" style="font-family:Liberation Sans;font-size:11px;fill:#333;stroke:#fff;stroke-width:2.5px;paint-order:stroke;stroke-linejoin:round">36,5</text>
<text transform="translate(646.26,914.92) rotate(-72.26)" text-anchor="start" dominant-baseline="central" style="font-family:Liberation Sans;font-size:11px;fill:#333;stroke:#fff;stroke-width:2.5px;paint-order:stroke;stroke-linejoin:round">-36,5</text>
<text transform="translate(743.50,293.40) rotate(-90.00)" text-anchor="end" dominant-baseline="central" style="font-family:Liberation Sans;font-size:11px;fill:#333;stroke:#fff;stroke-width:2.5px;paint-order:stroke;stroke-linejoin:round">50</text>
<text transform="translate(743.50,930.10) rotate(-90.00)" text-anchor="start" dominant-baseline="central" style="font-family:Liberation Sans;font-size:11px;fill:#333;stroke:#fff;stroke-width:2.5px;paint-order:stroke;stroke-linejoin:round">-50</text>
<text transform="translate(800.77,298.61) rotate(-79.61)" text-anchor="end" dominant-baseline="central" style="font-family:Liberation Sans;font-size:11px;fill:#333;stroke:#fff;stroke-width:2.5px;paint-order:stroke;stroke-linejoin:round">60</text>
<text transform="translate(793.85,921.10) rotate(-280.39)" text-anchor="end" dominant-baseline="central" style="font-family:Liberation Sans;font-size:11px;fill:#333;stroke:#fff;stroke-width:2.5px;paint-order:stroke;stroke-linejoin:round">-60</text>
<text transform="translate(911.29,341.34) rotate(-58.11)" text-anchor="end" dominant-baseline="central" style="font-family:Liberation Sans;font-size:11px;fill:#333;stroke:#fff;stroke-width:2.5px;paint-order:stroke;stroke-linejoin:round">90</text>
<text transform="translate(904.75,880.60) rotate(-301.89)" text-anchor="end" dominant-baseline="central" style="font-family:Liberation Sans;font-size:11px;fill:#333;stroke:#fff;stroke-width:2.5px;paint-order:stroke;stroke-linejoin:round">-90</text>
<text transform="translate(997.58,420.44) rotate(-36.87)" text-anchor="end" dominant-baseline="central" style="font-family:Liberation Sans;font-size:11px;fill:#333;stroke:#fff;stroke-width:2.5px;paint-order:stroke;stroke-linejoin:round">150</text>
<text transform="translate(992.44,802.58) rotate(-323.13)" text-anchor="end" dominant-baseline="central" style="font-family:Liberation Sans;font-size:11px;fill:#333;stroke:#fff;stroke-width:2.5px;paint-order:stroke;stroke-linejoin:round">-150</text>
<text transform="translate(1036.67,488.85) rotate(-22.62)" text-anchor="end" dominant-baseline="central" style="font-family:Liberation Sans;font-size:11px;fill:#333;stroke:#fff;stroke-width:2.5px;paint-order:stroke;stroke-linejoin:round">250</text>
<text transform="translate(1032.48,734.12) rotate(-337.38)" text-anchor="end" dominant-baseline="central" style="font-family:Liberation Sans;font-size:11px;fill:#333;stroke:#fff;stroke-width:2.5px;paint-order:stroke;stroke-linejoin:round">-250</text>
<text transform="translate(1058.29,568.84) rotate(-7.63)" text-anchor="end" dominant-baseline="central" style="font-family:Liberation Sans;font-size:11px;fill:#333;stroke:#fff;stroke-width:2.5px;paint-order:stroke;stroke-linejoin:round">750</text>
<text transform="translate(1054.71,653.55) rotate(-352.37)" text-anchor="end" dominant-baseline="central" style="font-family:Liberation Sans;font-size:11px;fill:#333;stroke:#fff;stroke-width:2.5px;paint-order:stroke;stroke-linejoin:round">-750</text>
<path d="M1065.60,611.00 C1065.43,606.87 1065.45,595.52 1064.60,586.20 C1063.75,576.88 1062.62,566.48 1060.50,555.10 C1058.38,543.72 1055.31,529.65 1051.85,517.90 C1048.40,506.16 1044.89,495.68 1039.77,484.61 C1034.64,473.55 1027.73,462.10 1021.10,451.50 C1014.47,440.90 1006.85,429.92 1000.00,421.00 C993.15,412.08 987.50,405.17 980.00,398.00 C972.50,390.83 963.33,383.83 955.00,378.00 C946.67,372.17 938.33,367.33 930.00,363.00 C921.67,358.67 913.33,355.08 905.00,352.00 C896.67,348.92 887.50,346.32 880.00,344.50 C872.50,342.68 867.55,341.98 860.00,341.10 C852.45,340.22 843.37,339.20 834.70,339.20 C826.03,339.20 817.38,339.43 808.00,341.10 C798.62,342.77 787.77,345.87 778.40,349.20 C769.03,352.53 760.43,355.92 751.80,361.10 C743.17,366.28 734.50,373.40 726.60,380.30 C718.70,387.20 711.07,393.62 704.40,402.50 C697.73,411.38 690.55,425.45 686.60,433.60 C682.65,441.75 682.25,445.33 680.70,451.40 C679.15,457.47 678.02,463.68 677.30,470.00 C676.58,476.32 676.28,482.88 676.40,489.30 C676.52,495.72 676.88,502.08 678.00,508.50 C679.12,514.92 680.97,521.80 683.10,527.80 C685.23,533.80 687.58,538.95 690.80,544.50 C694.02,550.05 697.90,555.77 702.40,561.10 C706.90,566.43 712.88,572.43 717.80,576.50 C722.72,580.57 727.20,583.13 731.90,585.50 C736.60,587.87 740.87,589.30 746.00,590.70 C751.13,592.10 757.35,593.48 762.70,593.90 C768.05,594.32 772.97,594.38 778.10,593.20 C783.23,592.02 789.65,589.15 793.50,586.80 C797.35,584.45 799.70,581.88 801.20,579.10 C802.70,576.32 803.13,573.10 802.50,570.10 C801.87,567.10 799.97,563.02 797.40,561.10 C794.83,559.18 790.75,558.70 787.10,558.60 C783.45,558.50 779.57,559.00 775.50,560.50 C771.43,562.00 766.55,564.72 762.70,567.60 C758.85,570.48 754.97,574.38 752.40,577.80 C749.83,581.22 748.57,584.40 747.30,588.10 C746.03,591.80 745.62,596.18 744.80,600.00 C743.98,603.82 742.77,607.37 742.40,611.00 C742.03,614.63 742.15,617.53 742.60,621.80 C743.05,626.07 743.57,631.90 745.10,636.60 C746.63,641.30 748.72,645.80 751.80,650.00 C754.88,654.20 759.40,658.60 763.60,661.80 C767.80,665.00 772.80,667.72 777.00,669.20 C781.20,670.68 785.10,671.43 788.80,670.70 C792.50,669.97 797.10,667.27 799.20,664.80 C801.30,662.33 801.90,658.98 801.40,655.90 C800.90,652.82 799.03,649.27 796.20,646.30 C793.37,643.33 789.08,640.20 784.40,638.10 C779.72,636.00 773.05,634.38 768.10,633.70 C763.15,633.02 758.90,633.52 754.70,634.00 C750.50,634.48 748.32,634.68 742.90,636.60 C737.48,638.52 728.62,642.03 722.20,645.50 C715.78,648.97 709.83,652.70 704.40,657.40 C698.97,662.10 693.80,667.78 689.60,673.70 C685.40,679.62 681.92,686.25 679.20,692.90 C676.48,699.55 674.77,706.45 673.30,713.60 C671.83,720.75 670.90,728.77 670.40,735.80 C669.90,742.83 669.67,748.52 670.30,755.80 C670.93,763.08 671.97,771.07 674.20,779.50 C676.43,787.93 679.75,798.23 683.70,806.40 C687.65,814.57 692.10,821.13 697.90,828.50 C703.70,835.87 710.87,844.02 718.50,850.60 C726.13,857.18 735.02,863.00 743.70,868.00 C752.38,873.00 761.38,877.32 770.60,880.60 C779.82,883.88 789.78,886.12 799.00,887.70 C808.22,889.28 815.73,890.10 825.90,890.10 C836.07,890.10 847.43,890.23 860.00,887.70 C872.57,885.17 887.98,879.82 901.30,874.90 C914.62,869.98 927.05,865.68 939.90,858.20 C952.75,850.72 967.94,839.15 978.40,830.00 C988.86,820.85 994.49,814.21 1002.65,803.30 C1010.80,792.38 1020.15,777.74 1027.34,764.52 C1034.53,751.30 1040.77,737.06 1045.78,723.98 C1050.78,710.90 1054.30,698.76 1057.35,686.05 C1060.41,673.33 1062.64,660.17 1064.11,647.67 C1065.58,635.16 1065.85,617.11 1066.20,611.00" fill="none" stroke="#1a58a0" stroke-width="2.2" clip-path="url(#uc2)"/>
<defs><clipPath id="uc2"><circle cx="743.5" cy="611.0" r="324.1"/></clipPath></defs>
<g fill="#b8283c" opacity="0.85"><rect x="731" y="609.7" width="22" height="2.6"/><rect x="740.4" y="600.3" width="3.2" height="21.3"/></g>
</svg>
<div class="t" style="left:753.9px;top:625.43px;font-size:11.9px;line-height:11.9px;color:#222;font-weight:400;">49,536 Ω / -50,251 fΩ</div>
<div class="t" style="left:758.2px;top:641.10px;font-size:11.7px;line-height:11.7px;color:#222;font-weight:400;">(@ 8,945 MHz)</div>
<div style="position:absolute;left:1249px;top:149px;width:246px;height:220px;border:1px solid #1e1e1e;box-sizing:border-box;background:#fff"></div>
<div style="position:absolute;left:1250px;top:150px;width:244px;height:18.5px;background:#15549b"></div>
<svg style="position:absolute;left:1255px;top:153px" width="12" height="12"><rect x="0.5" y="0.5" width="11" height="11" fill="#fff" stroke="#ccc"/><path d="M2.6,6.3 L5,8.8 L9.6,3.2" fill="none" stroke="#555" stroke-width="1.3"/></svg>
<div class="t" style="left:1272.5px;top:153.60px;font-size:11.7px;line-height:11.7px;color:#fff;font-weight:400;">Trace 1</div>
<svg style="position:absolute;left:1477px;top:155px" width="14" height="10"><path d="M3,2 L7.8,6.8 L12.6,2" fill="none" stroke="#fff" stroke-width="2.4" stroke-linecap="round"/></svg>
<div class="t" style="left:1255.8px;top:180.84px;font-size:12.0px;line-height:12.0px;color:#444;font-weight:400;">Measurement</div>
<div style="position:absolute;left:1338px;top:174px;width:151px;height:24px;background:linear-gradient(#f4f4f4,#e6e6e6 55%,#dcdcdc);border:1px solid #acacac;box-sizing:border-box"></div>
<div class="t" style="left:1349.5px;top:179.42px;font-size:12.5px;line-height:12.5px;color:#3a3a3a;font-weight:400;">Reflection</div>
<svg style="position:absolute;left:1471.5px;top:183.0px" width="10" height="6"><path d="M0.5,0.8 L9.5,0.8 L5,5.5 Z" fill="#111"/></svg>
<div class="t" style="left:1255.8px;top:208.84px;font-size:12.0px;line-height:12.0px;color:#444;font-weight:400;">Display</div>
<div style="position:absolute;left:1338px;top:202px;width:151px;height:23px;background:linear-gradient(#f4f4f4,#e6e6e6 55%,#dcdcdc);border:1px solid #acacac;box-sizing:border-box"></div>
<div class="t" style="left:1349.5px;top:207.42px;font-size:12.5px;line-height:12.5px;color:#3a3a3a;font-weight:400;">Measurement</div>
<svg style="position:absolute;left:1471.5px;top:210.5px" width="10" height="6"><path d="M0.5,0.8 L9.5,0.8 L5,5.5 Z" fill="#111"/></svg>
<div class="t" style="left:1255.8px;top:235.84px;font-size:12.0px;line-height:12.0px;color:#444;font-weight:400;">Format</div>
<div style="position:absolute;left:1338px;top:229px;width:151px;height:23px;background:linear-gradient(#f4f4f4,#e6e6e6 55%,#dcdcdc);border:1px solid #acacac;box-sizing:border-box"></div>
<div class="t" style="left:1349.5px;top:234.42px;font-size:12.5px;line-height:12.5px;color:#3a3a3a;font-weight:400;">Smith</div>
<svg style="position:absolute;left:1471.5px;top:237.5px" width="10" height="6"><path d="M0.5,0.8 L9.5,0.8 L5,5.5 Z" fill="#111"/></svg>
<div class="t" style="left:1255.8px;top:264.59px;font-size:12.3px;line-height:12.3px;color:#444;font-weight:400;">Y<span style="font-size:9.5px;position:relative;top:2px">max</span></div>
<div style="position:absolute;left:1338px;top:257px;width:151px;height:23px;background:#fff;border:1px solid #a8a8a8;box-sizing:border-box"></div>
<svg style="position:absolute;left:1475px;top:260.5px" width="10" height="16"><path d="M1.2,6.2 L5,1.2 L8.8,6.2 Z M1.2,9.8 L8.8,9.8 L5,14.8 Z" fill="#111"/></svg>
<div class="t" style="left:967px;width:500px;text-align:right;top:262.42px;font-size:12.5px;line-height:12.5px;color:#3a3a3a;font-weight:400;">1</div>
<div class="t" style="left:1255.8px;top:291.59px;font-size:12.3px;line-height:12.3px;color:#444;font-weight:400;">Y<span style="font-size:9.5px;position:relative;top:2px">min</span></div>
<div style="position:absolute;left:1338px;top:284px;width:151px;height:24px;background:#fff;border:1px solid #a8a8a8;box-sizing:border-box"></div>
<svg style="position:absolute;left:1475px;top:288.0px" width="10" height="16"><path d="M1.2,6.2 L5,1.2 L8.8,6.2 Z M1.2,9.8 L8.8,9.8 L5,14.8 Z" fill="#111"/></svg>
<div class="t" style="left:967px;width:500px;text-align:right;top:289.42px;font-size:12.5px;line-height:12.5px;color:#3a3a3a;font-weight:400;">-1</div>
<div class="t" style="left:1255.8px;top:319.59px;font-size:12.3px;line-height:12.3px;color:#444;font-weight:400;">X<span style="font-size:9.5px;position:relative;top:2px">max</span></div>
<div style="position:absolute;left:1338px;top:312px;width:151px;height:24px;background:#fff;border:1px solid #a8a8a8;box-sizing:border-box"></div>
<svg style="position:absolute;left:1475px;top:316.0px" width="10" height="16"><path d="M1.2,6.2 L5,1.2 L8.8,6.2 Z M1.2,9.8 L8.8,9.8 L5,14.8 Z" fill="#111"/></svg>
<div class="t" style="left:967px;width:500px;text-align:right;top:317.42px;font-size:12.5px;line-height:12.5px;color:#3a3a3a;font-weight:400;">1</div>
<div class="t" style="left:1255.8px;top:347.59px;font-size:12.3px;line-height:12.3px;color:#444;font-weight:400;">X<span style="font-size:9.5px;position:relative;top:2px">min</span></div>
<div style="position:absolute;left:1338px;top:340px;width:151px;height:23px;background:#fff;border:1px solid #a8a8a8;box-sizing:border-box"></div>
<svg style="position:absolute;left:1475px;top:343.5px" width="10" height="16"><path d="M1.2,6.2 L5,1.2 L8.8,6.2 Z M1.2,9.8 L8.8,9.8 L5,14.8 Z" fill="#111"/></svg>
<div class="t" style="left:967px;width:500px;text-align:right;top:345.42px;font-size:12.5px;line-height:12.5px;color:#3a3a3a;font-weight:400;">-1</div>
<div style="position:absolute;left:1249px;top:375px;width:246px;height:164px;border:1px solid #1e1e1e;box-sizing:border-box;background:#fff"></div>
<div style="position:absolute;left:1250px;top:376px;width:244px;height:17.5px;background:#b81223"></div>
<svg style="position:absolute;left:1255px;top:379px" width="12" height="12"><rect x="0.5" y="0.5" width="11" height="11" fill="#fff" stroke="#ccc"/></svg>
<div class="t" style="left:1272.5px;top:379.60px;font-size:11.7px;line-height:11.7px;color:#fff;font-weight:400;">Trace 2</div>
<svg style="position:absolute;left:1477px;top:381px" width="14" height="10"><path d="M3,2 L7.8,6.8 L12.6,2" fill="none" stroke="#fff" stroke-width="2.4" stroke-linecap="round"/></svg>
<div class="t" style="left:1255.8px;top:405.84px;font-size:12.0px;line-height:12.0px;color:#444;font-weight:400;">Measurement</div>
<div style="position:absolute;left:1338px;top:399px;width:151px;height:24px;background:linear-gradient(#f4f4f4,#e6e6e6 55%,#dcdcdc);border:1px solid #acacac;box-sizing:border-box"></div>
<div class="t" style="left:1349.5px;top:404.42px;font-size:12.5px;line-height:12.5px;color:#3a3a3a;font-weight:400;">Reflection</div>
<svg style="position:absolute;left:1471.5px;top:408.0px" width="10" height="6"><path d="M0.5,0.8 L9.5,0.8 L5,5.5 Z" fill="#111"/></svg>
<div class="t" style="left:1255.8px;top:433.84px;font-size:12.0px;line-height:12.0px;color:#444;font-weight:400;">Display</div>
<div style="position:absolute;left:1338px;top:427px;width:151px;height:23px;background:linear-gradient(#f4f4f4,#e6e6e6 55%,#dcdcdc);border:1px solid #acacac;box-sizing:border-box"></div>
<div class="t" style="left:1349.5px;top:432.42px;font-size:12.5px;line-height:12.5px;color:#3a3a3a;font-weight:400;">Measurement</div>
<svg style="position:absolute;left:1471.5px;top:435.5px" width="10" height="6"><path d="M0.5,0.8 L9.5,0.8 L5,5.5 Z" fill="#111"/></svg>
<div class="t" style="left:1255.8px;top:460.84px;font-size:12.0px;line-height:12.0px;color:#444;font-weight:400;">Format</div>
<div style="position:absolute;left:1338px;top:454px;width:151px;height:24px;background:linear-gradient(#f4f4f4,#e6e6e6 55%,#dcdcdc);border:1px solid #acacac;box-sizing:border-box"></div>
<div class="t" style="left:1349.5px;top:459.42px;font-size:12.5px;line-height:12.5px;color:#3a3a3a;font-weight:400;">Magnitude (dB)</div>
<svg style="position:absolute;left:1471.5px;top:463.0px" width="10" height="6"><path d="M0.5,0.8 L9.5,0.8 L5,5.5 Z" fill="#111"/></svg>
<div class="t" style="left:1255.8px;top:489.59px;font-size:12.3px;line-height:12.3px;color:#444;font-weight:400;">Y<span style="font-size:9.5px;position:relative;top:2px">max</span></div>
<div style="position:absolute;left:1338px;top:482px;width:151px;height:23px;background:#fff;border:1px solid #a8a8a8;box-sizing:border-box"></div>
<svg style="position:absolute;left:1475px;top:485.5px" width="10" height="16"><path d="M1.2,6.2 L5,1.2 L8.8,6.2 Z M1.2,9.8 L8.8,9.8 L5,14.8 Z" fill="#111"/></svg>
<div class="t" style="left:967px;width:500px;text-align:right;top:487.42px;font-size:12.5px;line-height:12.5px;color:#3a3a3a;font-weight:400;">10 dB</div>
<div class="t" style="left:1255.8px;top:516.59px;font-size:12.3px;line-height:12.3px;color:#444;font-weight:400;">Y<span style="font-size:9.5px;position:relative;top:2px">min</span></div>
<div style="position:absolute;left:1338px;top:509px;width:151px;height:23px;background:#fff;border:1px solid #a8a8a8;box-sizing:border-box"></div>
<svg style="position:absolute;left:1475px;top:512.5px" width="10" height="16"><path d="M1.2,6.2 L5,1.2 L8.8,6.2 Z M1.2,9.8 L8.8,9.8 L5,14.8 Z" fill="#111"/></svg>
<div class="t" style="left:967px;width:500px;text-align:right;top:514.42px;font-size:12.5px;line-height:12.5px;color:#3a3a3a;font-weight:400;">-40 dB</div>
<div style="position:absolute;left:1249px;top:968px;width:246px;height:23px;background:linear-gradient(#f6f6f6,#e4e4e4);border:1px solid #c8c8c8;box-sizing:border-box"></div>
<div class="t" style="left:1285.6px;top:973.75px;font-size:12.7px;line-height:12.7px;color:#3a3a3a;font-weight:400;">Measurement</div>
<svg style="position:absolute;left:1368px;top:973px" width="14" height="12"><path d="M1.5,6.5 H9" stroke="#222" stroke-width="1.6"/><path d="M7,2.8 L11.5,6.5 L7,10.2 Z" fill="#222"/></svg>
<div class="t" style="left:1384.5px;top:973.66px;font-size:12.8px;line-height:12.8px;color:#3a3a3a;font-weight:400;">new memory</div>
<div style="position:absolute;left:978px;top:997px;width:75px;height:15px;background:#434343;border:1px solid #cfcfcf;box-sizing:border-box"></div>
<div class="t" style="left:715.5px;width:600px;text-align:center;top:999.14px;font-size:12px;line-height:12px;color:#e8e8e8;font-weight:400;">Always On</div>
<div style="position:absolute;left:1060px;top:998px;width:1.5px;height:13px;background:#dfe6f0"></div>
<div style="position:absolute;left:1069px;top:997px;width:100px;height:15px;background:#434343;border:1px solid #cfcfcf;box-sizing:border-box"></div>
<div style="position:absolute;left:1144px;top:998px;width:1px;height:13px;background:#cfcfcf"></div>
<div class="t" style="left:806.5px;width:600px;text-align:center;top:999.14px;font-size:12px;line-height:12px;color:#e8e8e8;font-weight:400;">Receiver 1</div>
<div style="position:absolute;left:1171px;top:997px;width:100px;height:15px;background:#434343;border:1px solid #cfcfcf;box-sizing:border-box"></div>
<div style="position:absolute;left:1246px;top:998px;width:1px;height:13px;background:#cfcfcf"></div>
<div class="t" style="left:908.5px;width:600px;text-align:center;top:999.14px;font-size:12px;line-height:12px;color:#e8e8e8;font-weight:400;">Receiver 2</div>
<div style="position:absolute;left:1278px;top:998px;width:1.5px;height:13px;background:#dfe6f0"></div>
<svg style="position:absolute;left:1285px;top:996px" width="20" height="16"><path d="M1.5,13 V3 L4,1 V13 Z M5.5,13 V4 L8,6 V10.5 H15.5 V13 Z" fill="#fff"/><path d="M9,11.5H15" stroke="#15549b" stroke-width="0.6" stroke-dasharray="1,1"/></svg>
<div class="t" style="left:1040px;width:600px;text-align:center;top:998.33px;font-size:13.2px;line-height:13.2px;color:#fff;font-weight:400;">2017-05-22</div>
<div style="position:absolute;left:1380.5px;top:998px;width:1.5px;height:13px;background:#dfe6f0"></div>
<div class="t" style="left:1109px;width:600px;text-align:center;top:999.34px;font-size:12px;line-height:12px;color:#fff;font-weight:400;">JA752C</div>
<svg style="position:absolute;left:1434px;top:996px" width="66" height="17">
<path d="M16,8.5 H29" stroke="#19a319" stroke-width="1.2"/>
<circle cx="9" cy="8.5" r="7.6" fill="#12a012"/><path d="M5.3,8.7 L7.9,11.2 L12.8,6" fill="none" stroke="#fff" stroke-width="1.6"/>
<rect x="28.5" y="3" width="33" height="10" fill="none" stroke="#dfe6f0" stroke-width="1"/>
<path d="M61,5 V12.5 H54.5 Z" fill="#d01020"/>
</svg>
</body></html>
